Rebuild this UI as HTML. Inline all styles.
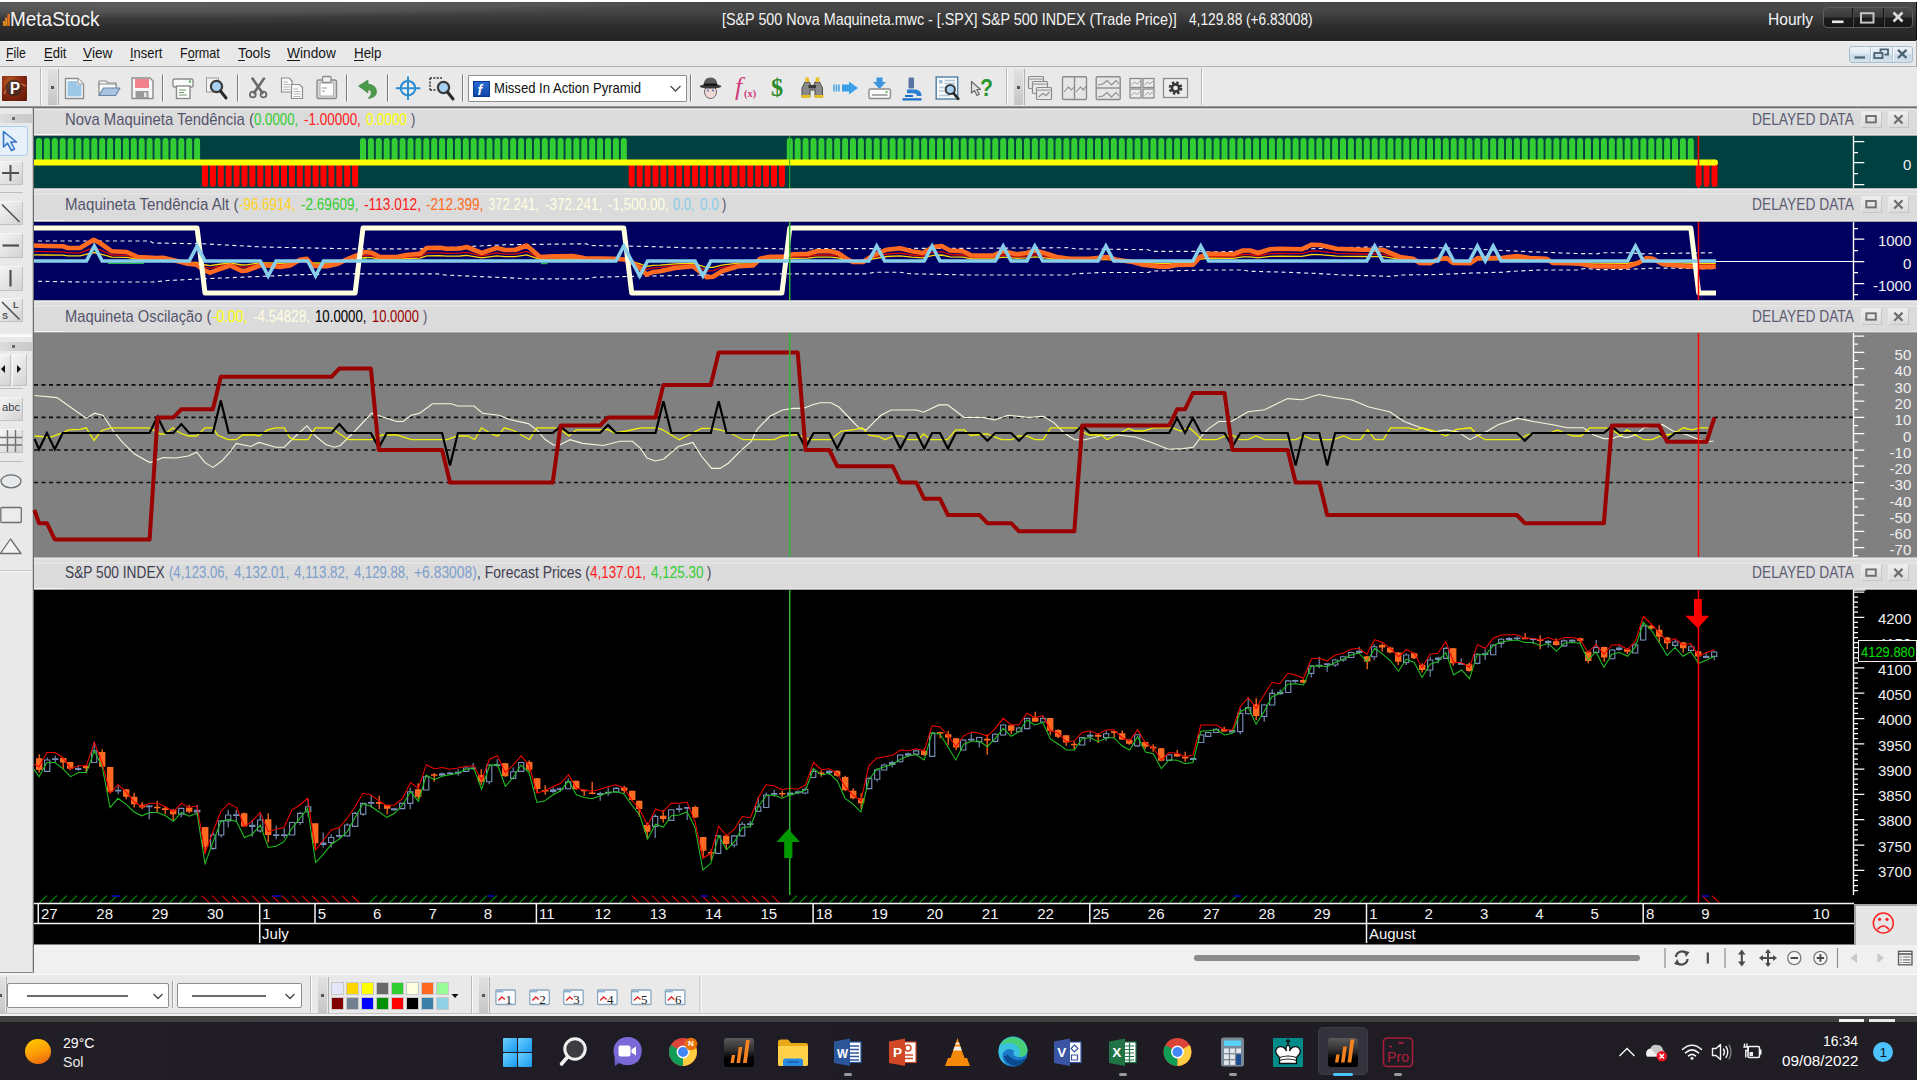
<!DOCTYPE html>
<html><head><meta charset="utf-8"><title>MetaStock</title><style>
html,body{margin:0;padding:0}
body{width:1920px;height:1080px;overflow:hidden;position:relative;background:#e9e9e9;font-family:"Liberation Sans",sans-serif}
.t{position:absolute;white-space:pre;line-height:1;transform-origin:0 0}
div{box-sizing:border-box}
svg{position:absolute;left:0;top:0}
</style></head><body>
<div style="position:absolute;left:1917px;top:0px;width:3px;height:1080px;background:#fff"></div>
<div style="position:absolute;left:0px;top:0px;width:1917px;height:2px;background:#ffffff"></div>
<div style="position:absolute;left:0px;top:2px;width:1917px;height:39px;background:linear-gradient(180deg,#3c3c3c 0%,#4a4a4a 3%,#464646 22%,#383838 45%,#2c2c2c 65%,#262626 92%,#222 100%)"></div>
<div style="position:absolute;left:1916px;top:2px;width:1px;height:39px;background:#0c0c0c"></div>
<div style="position:absolute;left:0;top:2px;width:1917px;height:38px;overflow:hidden"><div style="position:absolute;left:-500px;top:-40px;width:1300px;height:56px;border-radius:50%;background:radial-gradient(ellipse at 50% 40%,rgba(255,255,255,.17),rgba(255,255,255,.07) 60%,rgba(255,255,255,0) 72%)"></div></div>
<div style="position:absolute;left:1823px;top:7px;width:90px;height:21px;border:1px solid #5c5c5c;border-radius:4px;background:linear-gradient(180deg,#4a4a4a 0%,#3a3a3a 45%,#1c1c1c 55%,#161616 100%)"></div>
<div style="position:absolute;left:1852px;top:8px;width:1px;height:19px;background:#111;box-shadow:1px 0 0 #4a4a4a"></div>
<div style="position:absolute;left:1883px;top:8px;width:1px;height:19px;background:#111;box-shadow:1px 0 0 #4a4a4a"></div>
<div style="position:absolute;left:0px;top:41px;width:1917px;height:26px;background:#e9e9e9;border-top:1px solid #f4f4f4;border-bottom:1px solid #b2b2b2"></div>
<div style="position:absolute;left:1916px;top:40px;width:1px;height:974px;background:#a8a8a8"></div>
<div style="position:absolute;left:1849px;top:46px;width:64px;height:17px;border:1px solid #a9bfce;border-radius:3px;background:linear-gradient(180deg,#eef3f7 0%,#dfe9f0 45%,#c9dae6 55%,#d3e2ec 100%)"></div>
<div style="position:absolute;left:1870px;top:47px;width:1px;height:15px;background:#b4c8d6;box-shadow:1px 0 0 #f4f8fa"></div>
<div style="position:absolute;left:1892px;top:47px;width:1px;height:15px;background:#b4c8d6;box-shadow:1px 0 0 #f4f8fa"></div>
<div style="position:absolute;left:0px;top:67px;width:1917px;height:39px;background:#e9e9e9"></div>
<div style="position:absolute;left:0px;top:106px;width:1917px;height:1px;background:#9a9a9a"></div>
<div style="position:absolute;left:0px;top:107px;width:1917px;height:1px;background:#6c6c6c"></div>
<div style="position:absolute;left:0px;top:108px;width:33px;height:866px;background:#e9e9e9"></div>
<div style="position:absolute;left:33px;top:108px;width:1px;height:865px;background:#6e6e6e"></div>
<div style="position:absolute;left:0px;top:972px;width:34px;height:1px;background:#8c8c8c"></div>
<div style="position:absolute;left:32px;top:108px;width:1px;height:866px;background:#c8c8c8"></div>
<div style="position:absolute;left:0px;top:114px;width:32px;height:9px;background:linear-gradient(90deg,#dedede,#d0d0d0 50%,#cacaca)"></div>
<div style="position:absolute;left:12px;top:117px;width:3px;height:3px;background:#6a6a6a"></div>
<div style="position:absolute;left:0px;top:334px;width:32px;height:3px;background:#fafafa"></div>
<div style="position:absolute;left:0px;top:342px;width:32px;height:9px;background:linear-gradient(90deg,#dedede,#d0d0d0 50%,#cacaca)"></div>
<div style="position:absolute;left:12px;top:345px;width:3px;height:3px;background:#6a6a6a"></div>
<div style="position:absolute;left:-2px;top:126px;width:30px;height:30px;border:1px solid #a6d2f5;border-radius:3px;background:#e7f0f8"></div>
<div style="position:absolute;left:-1px;top:161px;width:24px;height:24px;border:1px solid #d4d4d4;border-top-color:#f6f6f6;border-left-color:#f6f6f6;border-bottom-color:#c2c2c2;border-right-color:#c2c2c2;background:linear-gradient(135deg,#f4f4f4 0%,#e4e4e4 50%,#d2d2d2 100%)"></div>
<div style="position:absolute;left:0px;top:192px;width:23px;height:1px;background:#bdbdbd"></div>
<div style="position:absolute;left:-1px;top:201px;width:24px;height:24px;border:1px solid #d4d4d4;border-top-color:#f6f6f6;border-left-color:#f6f6f6;border-bottom-color:#c2c2c2;border-right-color:#c2c2c2;background:linear-gradient(135deg,#f4f4f4 0%,#e4e4e4 50%,#d2d2d2 100%)"></div>
<div style="position:absolute;left:-1px;top:233px;width:24px;height:25px;border:1px solid #d4d4d4;border-top-color:#f6f6f6;border-left-color:#f6f6f6;border-bottom-color:#c2c2c2;border-right-color:#c2c2c2;background:linear-gradient(135deg,#f4f4f4 0%,#e4e4e4 50%,#d2d2d2 100%)"></div>
<div style="position:absolute;left:-1px;top:266px;width:24px;height:25px;border:1px solid #d4d4d4;border-top-color:#f6f6f6;border-left-color:#f6f6f6;border-bottom-color:#c2c2c2;border-right-color:#c2c2c2;background:linear-gradient(135deg,#f4f4f4 0%,#e4e4e4 50%,#d2d2d2 100%)"></div>
<div style="position:absolute;left:-1px;top:298px;width:24px;height:24px;border:1px solid #d4d4d4;border-top-color:#f6f6f6;border-left-color:#f6f6f6;border-bottom-color:#c2c2c2;border-right-color:#c2c2c2;background:linear-gradient(135deg,#f4f4f4 0%,#e4e4e4 50%,#d2d2d2 100%)"></div>
<div style="position:absolute;left:-1px;top:354px;width:12px;height:32px;border:1px solid #d4d4d4;border-top-color:#f6f6f6;border-left-color:#f6f6f6;border-bottom-color:#c2c2c2;border-right-color:#c2c2c2;background:linear-gradient(135deg,#f4f4f4 0%,#e4e4e4 50%,#d2d2d2 100%)"></div>
<div style="position:absolute;left:12px;top:354px;width:15px;height:32px;border:1px solid #d4d4d4;border-top-color:#f6f6f6;border-left-color:#f6f6f6;border-bottom-color:#c2c2c2;border-right-color:#c2c2c2;background:linear-gradient(135deg,#f4f4f4 0%,#e4e4e4 50%,#d2d2d2 100%)"></div>
<div style="position:absolute;left:0px;top:388px;width:23px;height:1px;background:#bdbdbd"></div>
<div style="position:absolute;left:-1px;top:397px;width:24px;height:24px;border:1px solid #d4d4d4;border-top-color:#f6f6f6;border-left-color:#f6f6f6;border-bottom-color:#c2c2c2;border-right-color:#c2c2c2;background:linear-gradient(135deg,#f4f4f4 0%,#e4e4e4 50%,#d2d2d2 100%)"></div>
<div style="position:absolute;left:-1px;top:429px;width:24px;height:24px;border:1px solid #d4d4d4;border-top-color:#f6f6f6;border-left-color:#f6f6f6;border-bottom-color:#c2c2c2;border-right-color:#c2c2c2;background:linear-gradient(135deg,#f4f4f4 0%,#e4e4e4 50%,#d2d2d2 100%)"></div>
<div style="position:absolute;left:0px;top:461px;width:23px;height:1px;background:#bdbdbd"></div>
<div style="position:absolute;left:0px;top:571px;width:32px;height:1px;background:#f8f8f8"></div>
<div style="position:absolute;left:0px;top:570px;width:32px;height:1px;background:#c4c4c4"></div>
<div style="position:absolute;left:34px;top:108px;width:1883px;height:1px;background:#c6c6c6"></div>
<div style="position:absolute;left:34px;top:109px;width:1883px;height:27px;background:#dbdbdb"></div>
<div style="position:absolute;left:34px;top:109px;width:1883px;height:3px;background:linear-gradient(180deg,#e8e8e8,#dadada)"></div>
<div style="position:absolute;left:34px;top:188px;width:1883px;height:1px;background:#b4bcbc"></div>
<div style="position:absolute;left:34px;top:189px;width:1883px;height:4px;background:linear-gradient(180deg,#e9e9e9,#d8d8d8)"></div>
<div style="position:absolute;left:34px;top:193px;width:1883px;height:29px;background:#dbdbdb"></div>
<div style="position:absolute;left:34px;top:193px;width:1883px;height:3px;background:linear-gradient(180deg,#e8e8e8,#dadada)"></div>
<div style="position:absolute;left:34px;top:300px;width:1883px;height:1px;background:#b4bcbc"></div>
<div style="position:absolute;left:34px;top:301px;width:1883px;height:4px;background:linear-gradient(180deg,#e9e9e9,#d8d8d8)"></div>
<div style="position:absolute;left:34px;top:305px;width:1883px;height:28px;background:#dbdbdb"></div>
<div style="position:absolute;left:34px;top:305px;width:1883px;height:3px;background:linear-gradient(180deg,#e8e8e8,#dadada)"></div>
<div style="position:absolute;left:34px;top:557px;width:1883px;height:1px;background:#b4bcbc"></div>
<div style="position:absolute;left:34px;top:558px;width:1883px;height:4px;background:linear-gradient(180deg,#e9e9e9,#d8d8d8)"></div>
<div style="position:absolute;left:34px;top:562px;width:1883px;height:28px;background:#dbdbdb"></div>
<div style="position:absolute;left:34px;top:562px;width:1883px;height:3px;background:linear-gradient(180deg,#e8e8e8,#dadada)"></div>
<div style="position:absolute;left:34px;top:134px;width:1883px;height:1px;background:#e6e6e6"></div>
<div style="position:absolute;left:34px;top:135px;width:1883px;height:1px;background:#a4a4a4"></div>
<div style="position:absolute;left:35px;top:134px;width:28px;height:1px;background:#f6f6f6"></div>
<div style="position:absolute;left:34px;top:220px;width:1883px;height:1px;background:#e6e6e6"></div>
<div style="position:absolute;left:34px;top:221px;width:1883px;height:1px;background:#a4a4a4"></div>
<div style="position:absolute;left:35px;top:220px;width:28px;height:1px;background:#f6f6f6"></div>
<div style="position:absolute;left:34px;top:331px;width:1883px;height:1px;background:#e6e6e6"></div>
<div style="position:absolute;left:34px;top:332px;width:1883px;height:1px;background:#a4a4a4"></div>
<div style="position:absolute;left:35px;top:331px;width:28px;height:1px;background:#f6f6f6"></div>
<div style="position:absolute;left:34px;top:588px;width:1883px;height:1px;background:#e6e6e6"></div>
<div style="position:absolute;left:34px;top:589px;width:1883px;height:1px;background:#a4a4a4"></div>
<div style="position:absolute;left:35px;top:588px;width:28px;height:1px;background:#f6f6f6"></div>
<div style="position:absolute;left:34px;top:136px;width:1883px;height:52px;background:#004040"></div>
<div style="position:absolute;left:34px;top:222px;width:1883px;height:78px;background:#000060"></div>
<div style="position:absolute;left:34px;top:333px;width:1883px;height:224px;background:#808080"></div>
<div style="position:absolute;left:34px;top:590px;width:1883px;height:314px;background:#000000"></div>
<div style="position:absolute;left:34px;top:904px;width:1820px;height:41px;background:#000;border-bottom:1px solid #7c7c7c"></div>
<div style="position:absolute;left:1854px;top:904px;width:63px;height:41px;background:#e6e6e6;border-top:2px solid #a4a4a4;border-left:2px solid #a4a4a4"></div>
<div style="position:absolute;left:34px;top:945px;width:1883px;height:29px;background:#f0f0f0"></div>
<div style="position:absolute;left:0px;top:974px;width:1917px;height:1px;background:#fbfbfb"></div>
<div style="position:absolute;left:1194px;top:955px;width:446px;height:6px;background:#8a8a8a;border-radius:3px"></div>
<div style="position:absolute;left:1860.6px;top:111.0px;width:21px;height:17px;border:1px solid #e8e8e8;border-bottom-color:#c6c6c6;border-right-color:#c6c6c6;background:linear-gradient(180deg,#efefef,#dadada)"></div>
<div style="position:absolute;left:1888px;top:111.0px;width:21px;height:17px;border:1px solid #e8e8e8;border-bottom-color:#c6c6c6;border-right-color:#c6c6c6;background:linear-gradient(180deg,#efefef,#dadada)"></div>
<div style="position:absolute;left:1860.6px;top:196.0px;width:21px;height:17px;border:1px solid #e8e8e8;border-bottom-color:#c6c6c6;border-right-color:#c6c6c6;background:linear-gradient(180deg,#efefef,#dadada)"></div>
<div style="position:absolute;left:1888px;top:196.0px;width:21px;height:17px;border:1px solid #e8e8e8;border-bottom-color:#c6c6c6;border-right-color:#c6c6c6;background:linear-gradient(180deg,#efefef,#dadada)"></div>
<div style="position:absolute;left:1860.6px;top:308.3px;width:21px;height:17px;border:1px solid #e8e8e8;border-bottom-color:#c6c6c6;border-right-color:#c6c6c6;background:linear-gradient(180deg,#efefef,#dadada)"></div>
<div style="position:absolute;left:1888px;top:308.3px;width:21px;height:17px;border:1px solid #e8e8e8;border-bottom-color:#c6c6c6;border-right-color:#c6c6c6;background:linear-gradient(180deg,#efefef,#dadada)"></div>
<div style="position:absolute;left:1860.6px;top:564.4px;width:21px;height:17px;border:1px solid #e8e8e8;border-bottom-color:#c6c6c6;border-right-color:#c6c6c6;background:linear-gradient(180deg,#efefef,#dadada)"></div>
<div style="position:absolute;left:1888px;top:564.4px;width:21px;height:17px;border:1px solid #e8e8e8;border-bottom-color:#c6c6c6;border-right-color:#c6c6c6;background:linear-gradient(180deg,#efefef,#dadada)"></div>
<div style="position:absolute;left:2px;top:76px;width:25px;height:25px;background:radial-gradient(circle at 35% 30%,#c8682a 0%,#8a2a10 45%,#5a1608 100%);border-radius:1px"></div>
<div style="position:absolute;left:48px;top:69px;width:9px;height:36px;background:linear-gradient(180deg,#e2e2e2,#c6c6c6)"></div>
<div style="position:absolute;left:51px;top:85.5px;width:3px;height:3px;background:#555"></div>
<div style="position:absolute;left:57.5px;top:69px;width:1px;height:36px;background:#b0b0b0"></div>
<div style="position:absolute;left:467.5px;top:75px;width:219px;height:27px;background:#fff;border:1px solid #8e8e8e;border-radius:1px"></div>
<div style="position:absolute;left:473px;top:81px;width:16.5px;height:16px;background:linear-gradient(180deg,#2a6ad0,#1048a8);border:1px solid #0a3a90"></div>
<div style="position:absolute;left:1014px;top:69px;width:9px;height:36px;background:linear-gradient(180deg,#e2e2e2,#c6c6c6)"></div>
<div style="position:absolute;left:1017px;top:85.5px;width:3px;height:3px;background:#555"></div>
<div style="position:absolute;left:1023.5px;top:69px;width:1px;height:36px;background:#b0b0b0"></div>
<div style="position:absolute;left:0px;top:975px;width:1917px;height:39px;background:#e9e9e9"></div>
<div style="position:absolute;left:0px;top:1013px;width:1917px;height:1px;background:#c4c4c4"></div>
<div style="position:absolute;left:0px;top:1014px;width:1917px;height:2px;background:#f0f0f0"></div>
<div style="position:absolute;left:7px;top:983px;width:162px;height:25px;background:#fff;border:1px solid #8e8e8e;border-radius:2px"></div>
<div style="position:absolute;left:177px;top:983px;width:124.5px;height:25px;background:#fff;border:1px solid #8e8e8e;border-radius:2px"></div>
<div style="position:absolute;left:318px;top:977px;width:9px;height:36px;background:linear-gradient(180deg,#e2e2e2,#c6c6c6)"></div>
<div style="position:absolute;left:321px;top:994px;width:3px;height:3px;background:#555"></div>
<div style="position:absolute;left:327.5px;top:977px;width:1px;height:36px;background:#b0b0b0"></div>
<div style="position:absolute;left:-4px;top:977px;width:9px;height:36px;background:linear-gradient(180deg,#e2e2e2,#c6c6c6)"></div>
<div style="position:absolute;left:-1px;top:994px;width:3px;height:3px;background:#555"></div>
<div style="position:absolute;left:5.5px;top:977px;width:1px;height:36px;background:#b0b0b0"></div>
<div style="position:absolute;left:331.0px;top:982px;width:13px;height:13px;background:#e6e6fa;border:1px solid #c8c8c8"></div>
<div style="position:absolute;left:331.0px;top:997.3px;width:13px;height:13px;background:#800000;border:1px solid #c8c8c8"></div>
<div style="position:absolute;left:346.05px;top:982px;width:13px;height:13px;background:#ffd700;border:1px solid #c8c8c8"></div>
<div style="position:absolute;left:346.05px;top:997.3px;width:13px;height:13px;background:#708090;border:1px solid #c8c8c8"></div>
<div style="position:absolute;left:361.1px;top:982px;width:13px;height:13px;background:#ffff00;border:1px solid #c8c8c8"></div>
<div style="position:absolute;left:361.1px;top:997.3px;width:13px;height:13px;background:#0000ff;border:1px solid #c8c8c8"></div>
<div style="position:absolute;left:376.15px;top:982px;width:13px;height:13px;background:#696969;border:1px solid #c8c8c8"></div>
<div style="position:absolute;left:376.15px;top:997.3px;width:13px;height:13px;background:#009000;border:1px solid #c8c8c8"></div>
<div style="position:absolute;left:391.2px;top:982px;width:13px;height:13px;background:#32cd32;border:1px solid #c8c8c8"></div>
<div style="position:absolute;left:391.2px;top:997.3px;width:13px;height:13px;background:#ff0000;border:1px solid #c8c8c8"></div>
<div style="position:absolute;left:406.25px;top:982px;width:13px;height:13px;background:#ffffe0;border:1px solid #c8c8c8"></div>
<div style="position:absolute;left:406.25px;top:997.3px;width:13px;height:13px;background:#000000;border:1px solid #c8c8c8"></div>
<div style="position:absolute;left:421.3px;top:982px;width:13px;height:13px;background:#ff6a20;border:1px solid #c8c8c8"></div>
<div style="position:absolute;left:421.3px;top:997.3px;width:13px;height:13px;background:#3a80a8;border:1px solid #c8c8c8"></div>
<div style="position:absolute;left:436.35px;top:982px;width:13px;height:13px;background:#98fb98;border:1px solid #c8c8c8"></div>
<div style="position:absolute;left:436.35px;top:997.3px;width:13px;height:13px;background:#90d0e4;border:1px solid #c8c8c8"></div>
<div style="position:absolute;left:479px;top:977px;width:9px;height:36px;background:linear-gradient(180deg,#e2e2e2,#c6c6c6)"></div>
<div style="position:absolute;left:482px;top:994px;width:3px;height:3px;background:#555"></div>
<div style="position:absolute;left:488.5px;top:977px;width:1px;height:36px;background:#b0b0b0"></div>
<div style="position:absolute;left:0px;top:1016px;width:1917px;height:6px;background:#404040"></div>
<div style="position:absolute;left:0px;top:1022px;width:1917px;height:58px;background:linear-gradient(90deg,#221e26 0%,#201c26 30%,#1f1b23 60%,#201d24 100%)"></div>
<div style="position:absolute;left:1839px;top:1019px;width:25px;height:3px;background:#f4f4f4"></div>
<div style="position:absolute;left:1868.5px;top:1019px;width:26.5px;height:3px;background:#e8e8e8"></div>
<div style="position:absolute;left:25.3px;top:1039px;width:25.4px;height:25.4px;border-radius:50%;background:linear-gradient(160deg,#ffc400 10%,#fb9a08 55%,#e85a0c 100%)"></div>
<div style="position:absolute;left:503px;top:1038px;width:14px;height:14px;background:linear-gradient(135deg,#6ad0ff,#1a98f0);border-radius:1px"></div>
<div style="position:absolute;left:518px;top:1038px;width:14px;height:14px;background:linear-gradient(135deg,#6ad0ff,#1a98f0);border-radius:1px"></div>
<div style="position:absolute;left:503px;top:1053px;width:14px;height:14px;background:linear-gradient(135deg,#6ad0ff,#1a98f0);border-radius:1px"></div>
<div style="position:absolute;left:518px;top:1053px;width:14px;height:14px;background:linear-gradient(135deg,#6ad0ff,#1a98f0);border-radius:1px"></div>
<div style="position:absolute;left:723.5px;top:1038px;width:30px;height:29px;background:linear-gradient(180deg,#5a5a5a 0%,#2c2c2c 45%,#000 70%);border-radius:3px"></div>
<div style="position:absolute;left:1273px;top:1037.5px;width:30px;height:29px;background:#008b8b"></div>
<div style="position:absolute;left:1318px;top:1027px;width:49.5px;height:48px;background:#34323c;border-radius:5px;border:1px solid #3e3c46"></div>
<div style="position:absolute;left:1328px;top:1037.5px;width:30px;height:29px;background:linear-gradient(180deg,#5a5a5a 0%,#2c2c2c 45%,#000 70%);border-radius:3px"></div>
<div style="position:absolute;left:844.0px;top:1073px;width:8px;height:3px;background:#9a9a9a;border-radius:1.5px"></div>
<div style="position:absolute;left:1119.0px;top:1073px;width:8px;height:3px;background:#9a9a9a;border-radius:1.5px"></div>
<div style="position:absolute;left:1229.0px;top:1073px;width:8px;height:3px;background:#9a9a9a;border-radius:1.5px"></div>
<div style="position:absolute;left:1333.0px;top:1073px;width:20px;height:3px;background:#4cc2ff;border-radius:1.5px"></div>
<div style="position:absolute;left:1394.0px;top:1073px;width:8px;height:3px;background:#9a9a9a;border-radius:1.5px"></div>
<div style="position:absolute;left:1873px;top:1042px;width:20px;height:20px;border-radius:50%;background:#4cc2ff"></div>
<svg width="1920" height="1080" viewBox="0 0 1920 1080">
<g><rect x="2.9" y="21" width="2.1" height="4.9" fill="#d98a22"/><rect x="5.2" y="17.6" width="2.1" height="8.3" fill="#ec8a1e"/><rect x="7.5" y="14.1" width="2.3" height="11.8" fill="#e87422"/></g>
<rect x="1832" y="20.5" width="11.5" height="2.6" fill="#e8e8e8"/>
<rect x="1861" y="13.2" width="12.5" height="9.4" fill="none" stroke="#c4c4c4" stroke-width="2"/>
<path d="M1893.5 12.5 L1902.5 21.5 M1902.5 12.5 L1893.5 21.5" stroke="#dcdcdc" stroke-width="2.6" fill="none"/>
<rect x="1854.5" y="56.4" width="10.5" height="2.2" fill="#4a6272"/>
<g fill="none" stroke="#4a6272" stroke-width="1.8"><path d="M1880.5 52.5 V49.3 H1888 V54.5 H1884.5"/><rect x="1874.3" y="53" width="8.2" height="5"/></g>
<path d="M1898 49.8 L1906.5 58 M1906.5 49.8 L1898 58" stroke="#4a6272" stroke-width="2.3" fill="none"/>
<path d="M3.5 131.5 L3.5 147 L7.5 143.2 L11.5 150.5 L14.5 149 L10.8 142 L16.5 142 Z" fill="#dfeefc" stroke="#3a78c8" stroke-width="1.6" stroke-linejoin="round"/>
<path d="M10.5 165 V181 M2 173 H19" stroke="#505050" stroke-width="2" fill="none"/>
<path d="M2 204.5 L19.5 222" stroke="#505050" stroke-width="1.6"/>
<path d="M2.5 245.5 H19" stroke="#505050" stroke-width="2.2"/>
<path d="M10.5 270 V286.5" stroke="#505050" stroke-width="2.2"/>
<path d="M2 302 L19.5 319.5" stroke="#505050" stroke-width="1.6"/>
<path d="M1 369 L5 365 V373 Z M21 369 L17 365 V373 Z" fill="#111"/>
<path d="M7.5 430 V452 M15.5 430 V452 M0 437.5 H22 M0 445 H22" stroke="#707070" stroke-width="1.4"/>
<ellipse cx="11" cy="481.3" rx="10" ry="6.5" fill="#e6eaec" stroke="#6e6e6e" stroke-width="1.3"/>
<rect x="0.8" y="507.5" width="20.5" height="15" rx="1" fill="#ececec" stroke="#6e6e6e" stroke-width="1.3"/>
<path d="M10.5 539 L21 553.5 H0.5 Z" fill="#f2f4f4" stroke="#6e6e6e" stroke-width="1.3" stroke-linejoin="round"/>
<rect x="1866.3" y="116.0" width="9.5" height="6.4" fill="none" stroke="#6e6e6e" stroke-width="1.9"/>
<path d="M1894.3 115.3 L1902.5 123.5 M1902.5 115.3 L1894.3 123.5" stroke="#6e6e6e" stroke-width="2.2" fill="none"/>
<rect x="1866.3" y="201.0" width="9.5" height="6.4" fill="none" stroke="#6e6e6e" stroke-width="1.9"/>
<path d="M1894.3 200.3 L1902.5 208.5 M1902.5 200.3 L1894.3 208.5" stroke="#6e6e6e" stroke-width="2.2" fill="none"/>
<rect x="1866.3" y="313.3" width="9.5" height="6.4" fill="none" stroke="#6e6e6e" stroke-width="1.9"/>
<path d="M1894.3 312.6 L1902.5 320.8 M1902.5 312.6 L1894.3 320.8" stroke="#6e6e6e" stroke-width="2.2" fill="none"/>
<rect x="1866.3" y="569.4" width="9.5" height="6.4" fill="none" stroke="#6e6e6e" stroke-width="1.9"/>
<path d="M1894.3 568.6999999999999 L1902.5 576.9 M1902.5 568.6999999999999 L1894.3 576.9" stroke="#6e6e6e" stroke-width="2.2" fill="none"/>
<path d="M39.0 141 V160 M46.9 141 V160 M54.8 141 V160 M62.7 141 V160 M70.6 141 V160 M78.5 141 V160 M86.4 141 V160 M94.3 141 V160 M102.2 141 V160 M110.1 141 V160 M118.0 141 V160 M125.9 141 V160 M133.8 141 V160 M141.7 141 V160 M149.6 141 V160 M157.5 141 V160 M165.5 141 V160 M173.4 141 V160 M181.3 141 V160 M189.2 141 V160 M197.1 141 V160 M363.0 141 V160 M370.9 141 V160 M378.8 141 V160 M386.7 141 V160 M394.6 141 V160 M402.6 141 V160 M410.5 141 V160 M418.4 141 V160 M426.3 141 V160 M434.2 141 V160 M442.1 141 V160 M450.0 141 V160 M457.9 141 V160 M465.8 141 V160 M473.7 141 V160 M481.6 141 V160 M489.5 141 V160 M497.4 141 V160 M505.3 141 V160 M513.2 141 V160 M521.1 141 V160 M529.0 141 V160 M536.9 141 V160 M544.8 141 V160 M552.7 141 V160 M560.6 141 V160 M568.5 141 V160 M576.4 141 V160 M584.3 141 V160 M592.2 141 V160 M600.1 141 V160 M608.0 141 V160 M615.9 141 V160 M623.8 141 V160 M789.8 141 V160 M797.7 141 V160 M805.6 141 V160 M813.5 141 V160 M821.4 141 V160 M829.3 141 V160 M837.2 141 V160 M845.1 141 V160 M853.0 141 V160 M860.9 141 V160 M868.8 141 V160 M876.7 141 V160 M884.7 141 V160 M892.6 141 V160 M900.5 141 V160 M908.4 141 V160 M916.3 141 V160 M924.2 141 V160 M932.1 141 V160 M940.0 141 V160 M947.9 141 V160 M955.8 141 V160 M963.7 141 V160 M971.6 141 V160 M979.5 141 V160 M987.4 141 V160 M995.3 141 V160 M1003.2 141 V160 M1011.1 141 V160 M1019.0 141 V160 M1026.9 141 V160 M1034.8 141 V160 M1042.7 141 V160 M1050.6 141 V160 M1058.5 141 V160 M1066.4 141 V160 M1074.3 141 V160 M1082.2 141 V160 M1090.1 141 V160 M1098.0 141 V160 M1105.9 141 V160 M1113.8 141 V160 M1121.8 141 V160 M1129.7 141 V160 M1137.6 141 V160 M1145.5 141 V160 M1153.4 141 V160 M1161.3 141 V160 M1169.2 141 V160 M1177.1 141 V160 M1185.0 141 V160 M1192.9 141 V160 M1200.8 141 V160 M1208.7 141 V160 M1216.6 141 V160 M1224.5 141 V160 M1232.4 141 V160 M1240.3 141 V160 M1248.2 141 V160 M1256.1 141 V160 M1264.0 141 V160 M1271.9 141 V160 M1279.8 141 V160 M1287.7 141 V160 M1295.6 141 V160 M1303.5 141 V160 M1311.4 141 V160 M1319.3 141 V160 M1327.2 141 V160 M1335.1 141 V160 M1343.0 141 V160 M1350.9 141 V160 M1358.9 141 V160 M1366.8 141 V160 M1374.7 141 V160 M1382.6 141 V160 M1390.5 141 V160 M1398.4 141 V160 M1406.3 141 V160 M1414.2 141 V160 M1422.1 141 V160 M1430.0 141 V160 M1437.9 141 V160 M1445.8 141 V160 M1453.7 141 V160 M1461.6 141 V160 M1469.5 141 V160 M1477.4 141 V160 M1485.3 141 V160 M1493.2 141 V160 M1501.1 141 V160 M1509.0 141 V160 M1516.9 141 V160 M1524.8 141 V160 M1532.7 141 V160 M1540.6 141 V160 M1548.5 141 V160 M1556.4 141 V160 M1564.3 141 V160 M1572.2 141 V160 M1580.1 141 V160 M1588.0 141 V160 M1596.0 141 V160 M1603.9 141 V160 M1611.8 141 V160 M1619.7 141 V160 M1627.6 141 V160 M1635.5 141 V160 M1643.4 141 V160 M1651.3 141 V160 M1659.2 141 V160 M1667.1 141 V160 M1675.0 141 V160 M1682.9 141 V160 M1690.8 141 V160 " stroke="#32cd32" stroke-width="6" stroke-linecap="round" fill="none"/>
<path d="M205.0 165 V184 M212.9 165 V184 M220.8 165 V184 M228.7 165 V184 M236.6 165 V184 M244.5 165 V184 M252.4 165 V184 M260.3 165 V184 M268.2 165 V184 M276.1 165 V184 M284.0 165 V184 M291.9 165 V184 M299.8 165 V184 M307.7 165 V184 M315.6 165 V184 M323.5 165 V184 M331.4 165 V184 M339.3 165 V184 M347.2 165 V184 M355.1 165 V184 M631.7 165 V184 M639.7 165 V184 M647.6 165 V184 M655.5 165 V184 M663.4 165 V184 M671.3 165 V184 M679.2 165 V184 M687.1 165 V184 M695.0 165 V184 M702.9 165 V184 M710.8 165 V184 M718.7 165 V184 M726.6 165 V184 M734.5 165 V184 M742.4 165 V184 M750.3 165 V184 M758.2 165 V184 M766.1 165 V184 M774.0 165 V184 M781.9 165 V184 M1698.7 165 V184 M1706.6 165 V184 M1714.5 165 V184 " stroke="#ff0000" stroke-width="6" stroke-linecap="round" fill="none"/>
<rect x="34" y="159.5" width="1681" height="6" fill="#ffff00"/><circle cx="1715" cy="162.5" r="3" fill="#ffff00"/>
<path d="M1853.5 136 V188" stroke="#fff" stroke-width="1.4"/>
<path d="M1853.5 141.5 h10.8 M1853.5 162.5 h10.8 M1853.5 184.5 h10.8 M1853.5 152.5 h4.5 M1853.5 173.5 h4.5 " stroke="#fff" stroke-width="1.25"/>
<polyline points="38.0,241.0 150.0,241.0 153.0,243.0 203.0,243.8 263.0,247.0 350.0,248.8 420.0,248.8 440.0,248.0 473.0,246.3 506.7,244.7 586.7,243.8 590.0,245.5 650.0,246.5 691.7,248.0 716.7,247.7 750.0,248.0 783.0,248.8 970.0,248.3 1068.0,247.7 1075.0,248.8 1148.0,249.7 1152.0,251.3 1193.0,251.3 1210.0,252.0 1280.0,250.3 1311.7,248.8 1336.7,247.7 1386.7,246.7 1436.7,247.7 1470.0,248.8 1503.0,250.5 1536.7,252.0 1576.7,253.5 1598.0,253.8 1601.0,252.7 1626.7,252.7 1643.0,253.8 1715.0,252.7" fill="none" stroke="#f0f0f0" stroke-width="1.15" stroke-dasharray="4 3.5"/>
<polyline points="38.0,281.3 80.0,282.0 153.0,282.0 168.0,280.5 203.0,278.8 263.0,276.3 300.0,274.7 350.0,273.8 436.7,273.8 445.0,275.0 473.0,276.3 506.7,277.7 526.7,278.8 586.7,278.8 595.0,277.2 650.0,276.0 733.0,274.7 783.0,273.8 866.7,273.8 875.0,272.2 900.0,272.2 910.0,273.8 970.0,275.0 1068.0,275.0 1075.0,273.8 1101.7,272.5 1148.0,272.5 1153.0,271.0 1210.0,270.0 1243.0,270.0 1250.0,271.3 1285.0,272.2 1315.0,273.4 1343.0,275.0 1390.0,276.3 1403.0,275.0 1441.7,274.4 1473.0,273.0 1503.0,272.2 1511.7,271.3 1540.0,270.0 1576.7,270.0 1585.0,268.5 1601.7,269.7 1626.7,269.3 1660.0,268.0 1715.0,268.8" fill="none" stroke="#f0f0f0" stroke-width="1.15" stroke-dasharray="4 3.5"/>
<path d="M108 263.3 H144 M541 263.5 H547.5 M362.5 258.8 H366.7" stroke="#22b14c" stroke-width="1.5"/>
<polyline points="34.0,251.4 46.7,251.7 63.0,251.9 68.0,252.9 80.0,252.9 93.8,247.8 100.0,249.8 111.7,255.0 126.7,255.4 138.0,258.5 156.7,259.1 163.0,259.0 171.7,260.2 180.0,261.4 188.0,262.7 196.7,263.3 203.0,266.4 210.0,268.3 218.0,266.4 230.0,263.8 241.7,267.2 246.7,266.9 260.0,263.8 268.0,263.8 280.0,264.7 290.0,263.8 300.0,260.2 306.7,259.6 313.0,264.1 326.7,264.3 338.0,262.7 348.0,259.6 356.7,257.6 365.0,255.4 371.7,255.9 380.0,258.5 396.7,258.5 406.7,257.3 420.0,256.5 426.7,252.9 440.0,252.8 446.7,253.4 460.0,253.2 466.7,252.3 481.7,256.0 496.7,252.9 505.0,254.2 515.0,254.2 526.7,251.4 540.0,258.5 553.0,258.1 573.0,257.9 585.0,259.3 615.0,259.6 626.7,260.2 633.0,262.2 640.0,265.3 646.7,269.5 653.0,267.8 660.0,267.4 675.0,265.3 693.0,264.3 706.7,271.0 713.0,270.7 721.7,267.4 738.0,264.3 753.0,263.8 760.0,259.6 770.0,258.3 783.0,258.3 793.0,256.8 808.0,256.5 816.7,255.0 830.0,255.0 838.0,256.0 848.0,260.2 853.0,261.6 863.0,261.6 873.0,257.6 886.7,254.0 900.0,253.1 911.7,255.0 923.0,256.0 933.0,252.3 941.7,251.7 950.0,254.5 963.0,255.0 971.7,257.6 993.0,257.6 1003.0,255.0 1016.7,256.8 1026.7,256.0 1035.0,254.5 1046.7,256.5 1056.7,258.5 1070.0,259.6 1090.0,259.6 1106.7,258.5 1116.7,260.2 1133.0,261.6 1143.0,263.3 1160.0,264.5 1168.0,264.5 1176.7,263.5 1193.0,263.3 1200.0,258.5 1208.0,256.5 1233.0,256.8 1243.0,254.5 1250.0,254.5 1258.0,256.0 1270.0,253.7 1280.0,253.4 1301.7,253.7 1311.7,250.9 1320.0,251.1 1336.7,253.4 1361.7,254.0 1383.0,254.2 1400.0,258.5 1413.0,259.6 1420.0,262.2 1430.0,262.4 1436.7,260.2 1446.7,259.1 1453.0,262.2 1470.0,262.4 1478.0,259.1 1493.0,259.1 1503.0,259.0 1516.7,257.9 1530.0,259.1 1546.7,259.6 1553.0,262.2 1570.0,262.4 1580.0,262.7 1593.0,264.3 1626.7,264.5 1638.0,262.2 1646.7,259.1 1653.0,259.6 1663.0,263.0 1685.0,264.3 1701.7,264.8 1715.8,264.5" fill="none" stroke="#e00000" stroke-width="1.3"/>
<polyline points="34.0,254.8 46.7,255.0 63.0,255.1 68.0,255.8 80.0,255.8 93.8,252.5 100.0,253.8 111.7,257.1 126.7,257.4 138.0,259.4 156.7,259.8 163.0,259.7 171.7,260.5 180.0,261.3 188.0,262.1 196.7,262.5 203.0,264.5 210.0,265.7 218.0,264.5 230.0,262.8 241.7,265.0 246.7,264.8 260.0,262.8 268.0,262.8 280.0,263.4 290.0,262.8 300.0,260.5 306.7,260.1 313.0,263.0 326.7,263.1 338.0,262.1 348.0,260.1 356.7,258.8 365.0,257.4 371.7,257.7 380.0,259.4 396.7,259.4 406.7,258.6 420.0,258.1 426.7,255.8 440.0,255.7 446.7,256.1 460.0,256.0 466.7,255.4 481.7,257.8 496.7,255.8 505.0,256.6 515.0,256.6 526.7,254.8 540.0,259.4 553.0,259.1 573.0,259.0 585.0,259.9 615.0,260.1 626.7,260.5 633.0,261.8 640.0,263.8 646.7,266.5 653.0,265.4 660.0,265.1 675.0,263.8 693.0,263.1 706.7,267.5 713.0,267.3 721.7,265.1 738.0,263.1 753.0,262.8 760.0,260.1 770.0,259.3 783.0,259.3 793.0,258.3 808.0,258.1 816.7,257.1 830.0,257.1 838.0,257.8 848.0,260.5 853.0,261.4 863.0,261.4 873.0,258.8 886.7,256.5 900.0,255.9 911.7,257.1 923.0,257.8 933.0,255.4 941.7,255.0 950.0,256.8 963.0,257.1 971.7,258.8 993.0,258.8 1003.0,257.1 1016.7,258.3 1026.7,257.8 1035.0,256.8 1046.7,258.1 1056.7,259.4 1070.0,260.1 1090.0,260.1 1106.7,259.4 1116.7,260.5 1133.0,261.4 1143.0,262.5 1160.0,263.3 1168.0,263.3 1176.7,262.6 1193.0,262.5 1200.0,259.4 1208.0,258.1 1233.0,258.3 1243.0,256.8 1250.0,256.8 1258.0,257.8 1270.0,256.3 1280.0,256.1 1301.7,256.3 1311.7,254.5 1320.0,254.6 1336.7,256.1 1361.7,256.5 1383.0,256.6 1400.0,259.4 1413.0,260.1 1420.0,261.8 1430.0,261.9 1436.7,260.5 1446.7,259.8 1453.0,261.8 1470.0,261.9 1478.0,259.8 1493.0,259.8 1503.0,259.7 1516.7,259.0 1530.0,259.8 1546.7,260.1 1553.0,261.8 1570.0,261.9 1580.0,262.1 1593.0,263.1 1626.7,263.3 1638.0,261.8 1646.7,259.8 1653.0,260.1 1663.0,262.3 1685.0,263.1 1701.7,263.5 1715.8,263.3" fill="none" stroke="#ffd700" stroke-width="1.3"/>
<polyline points="34.0,245.5 46.7,246.0 63.0,246.3 68.0,248.0 80.0,248.0 93.8,239.7 100.0,243.0 111.7,251.3 126.7,252.0 138.0,257.0 156.7,258.0 163.0,257.7 171.7,259.7 180.0,261.7 188.0,263.8 196.7,264.7 203.0,269.7 210.0,272.7 218.0,269.7 230.0,265.5 241.7,271.0 246.7,270.5 260.0,265.5 268.0,265.5 280.0,267.0 290.0,265.5 300.0,259.7 306.7,258.8 313.0,266.0 326.7,266.3 338.0,263.8 348.0,258.8 356.7,255.5 365.0,252.0 371.7,252.7 380.0,257.0 396.7,257.0 406.7,255.0 420.0,253.8 426.7,248.0 440.0,247.7 446.7,248.8 460.0,248.5 466.7,247.0 481.7,253.0 496.7,248.0 505.0,250.0 515.0,250.0 526.7,245.5 540.0,257.0 553.0,256.3 573.0,256.0 585.0,258.3 615.0,258.8 626.7,259.7 633.0,263.0 640.0,268.0 646.7,274.7 653.0,272.0 660.0,271.3 675.0,268.0 693.0,266.3 706.7,277.2 713.0,276.7 721.7,271.3 738.0,266.3 753.0,265.5 760.0,258.8 770.0,256.7 783.0,256.7 793.0,254.3 808.0,253.8 816.7,251.3 830.0,251.3 838.0,253.0 848.0,259.7 853.0,262.0 863.0,262.0 873.0,255.5 886.7,249.7 900.0,248.3 911.7,251.3 923.0,253.0 933.0,247.0 941.7,246.0 950.0,250.5 963.0,251.3 971.7,255.5 993.0,255.5 1003.0,251.3 1016.7,254.3 1026.7,253.0 1035.0,250.5 1046.7,253.8 1056.7,257.0 1070.0,258.8 1090.0,258.8 1106.7,257.0 1116.7,259.7 1133.0,262.0 1143.0,264.7 1160.0,266.7 1168.0,266.7 1176.7,265.0 1193.0,264.7 1200.0,257.0 1208.0,253.8 1233.0,254.3 1243.0,250.5 1250.0,250.5 1258.0,253.0 1270.0,249.3 1280.0,248.8 1301.7,249.3 1311.7,244.7 1320.0,245.0 1336.7,248.8 1361.7,249.7 1383.0,250.0 1400.0,257.0 1413.0,258.8 1420.0,263.0 1430.0,263.3 1436.7,259.7 1446.7,258.0 1453.0,263.0 1470.0,263.3 1478.0,258.0 1493.0,258.0 1503.0,257.7 1516.7,256.0 1530.0,258.0 1546.7,258.8 1553.0,263.0 1570.0,263.3 1580.0,263.8 1593.0,266.3 1626.7,266.7 1638.0,263.0 1646.7,258.0 1653.0,258.8 1663.0,264.3 1685.0,266.3 1701.7,267.2 1715.8,266.7" fill="none" stroke="#ff6a20" stroke-width="4.6" stroke-linejoin="round"/>
<polyline points="34.0,228.0 39.0,228.0 46.9,228.0 54.8,228.0 62.7,228.0 70.6,228.0 78.5,228.0 86.4,228.0 94.3,228.0 102.2,228.0 110.1,228.0 118.0,228.0 125.9,228.0 133.8,228.0 141.7,228.0 149.6,228.0 157.5,228.0 165.5,228.0 173.4,228.0 181.3,228.0 189.2,228.0 197.1,228.0 205.0,293.0 212.9,293.0 220.8,293.0 228.7,293.0 236.6,293.0 244.5,293.0 252.4,293.0 260.3,293.0 268.2,293.0 276.1,293.0 284.0,293.0 291.9,293.0 299.8,293.0 307.7,293.0 315.6,293.0 323.5,293.0 331.4,293.0 339.3,293.0 347.2,293.0 355.1,293.0 363.0,228.0 370.9,228.0 378.8,228.0 386.7,228.0 394.6,228.0 402.6,228.0 410.5,228.0 418.4,228.0 426.3,228.0 434.2,228.0 442.1,228.0 450.0,228.0 457.9,228.0 465.8,228.0 473.7,228.0 481.6,228.0 489.5,228.0 497.4,228.0 505.3,228.0 513.2,228.0 521.1,228.0 529.0,228.0 536.9,228.0 544.8,228.0 552.7,228.0 560.6,228.0 568.5,228.0 576.4,228.0 584.3,228.0 592.2,228.0 600.1,228.0 608.0,228.0 615.9,228.0 623.8,228.0 631.7,293.0 639.7,293.0 647.6,293.0 655.5,293.0 663.4,293.0 671.3,293.0 679.2,293.0 687.1,293.0 695.0,293.0 702.9,293.0 710.8,293.0 718.7,293.0 726.6,293.0 734.5,293.0 742.4,293.0 750.3,293.0 758.2,293.0 766.1,293.0 774.0,293.0 781.9,293.0 789.8,228.0 797.7,228.0 805.6,228.0 813.5,228.0 821.4,228.0 829.3,228.0 837.2,228.0 845.1,228.0 853.0,228.0 860.9,228.0 868.8,228.0 876.7,228.0 884.7,228.0 892.6,228.0 900.5,228.0 908.4,228.0 916.3,228.0 924.2,228.0 932.1,228.0 940.0,228.0 947.9,228.0 955.8,228.0 963.7,228.0 971.6,228.0 979.5,228.0 987.4,228.0 995.3,228.0 1003.2,228.0 1011.1,228.0 1019.0,228.0 1026.9,228.0 1034.8,228.0 1042.7,228.0 1050.6,228.0 1058.5,228.0 1066.4,228.0 1074.3,228.0 1082.2,228.0 1090.1,228.0 1098.0,228.0 1105.9,228.0 1113.8,228.0 1121.8,228.0 1129.7,228.0 1137.6,228.0 1145.5,228.0 1153.4,228.0 1161.3,228.0 1169.2,228.0 1177.1,228.0 1185.0,228.0 1192.9,228.0 1200.8,228.0 1208.7,228.0 1216.6,228.0 1224.5,228.0 1232.4,228.0 1240.3,228.0 1248.2,228.0 1256.1,228.0 1264.0,228.0 1271.9,228.0 1279.8,228.0 1287.7,228.0 1295.6,228.0 1303.5,228.0 1311.4,228.0 1319.3,228.0 1327.2,228.0 1335.1,228.0 1343.0,228.0 1350.9,228.0 1358.9,228.0 1366.8,228.0 1374.7,228.0 1382.6,228.0 1390.5,228.0 1398.4,228.0 1406.3,228.0 1414.2,228.0 1422.1,228.0 1430.0,228.0 1437.9,228.0 1445.8,228.0 1453.7,228.0 1461.6,228.0 1469.5,228.0 1477.4,228.0 1485.3,228.0 1493.2,228.0 1501.1,228.0 1509.0,228.0 1516.9,228.0 1524.8,228.0 1532.7,228.0 1540.6,228.0 1548.5,228.0 1556.4,228.0 1564.3,228.0 1572.2,228.0 1580.1,228.0 1588.0,228.0 1596.0,228.0 1603.9,228.0 1611.8,228.0 1619.7,228.0 1627.6,228.0 1635.5,228.0 1643.4,228.0 1651.3,228.0 1659.2,228.0 1667.1,228.0 1675.0,228.0 1682.9,228.0 1690.8,228.0 1698.7,293.0 1706.6,293.0 1714.5,293.0 1716.0,293.0" fill="none" stroke="#ffffe0" stroke-width="5" stroke-linejoin="round"/>
<polyline points="34.0,261.0 39.0,261.0 46.9,261.0 54.8,261.0 62.7,261.0 70.6,261.0 78.5,261.0 86.4,261.0 94.3,246.0 102.2,261.0 110.1,261.0 118.0,261.0 125.9,261.0 133.8,261.0 141.7,261.0 149.6,261.0 157.5,261.0 165.5,261.0 173.4,261.0 181.3,261.0 189.2,261.0 197.1,246.0 205.0,261.0 212.9,261.0 220.8,261.0 228.7,261.0 236.6,261.0 244.5,261.0 252.4,261.0 260.3,261.0 268.2,276.0 276.1,261.0 284.0,261.0 291.9,261.0 299.8,261.0 307.7,261.0 315.6,276.0 323.5,261.0 331.4,261.0 339.3,261.0 347.2,261.0 355.1,261.0 363.0,261.0 370.9,261.0 378.8,261.0 386.7,261.0 394.6,261.0 402.6,261.0 410.5,261.0 418.4,261.0 426.3,261.0 434.2,261.0 442.1,261.0 450.0,261.0 457.9,261.0 465.8,261.0 473.7,261.0 481.6,261.0 489.5,261.0 497.4,261.0 505.3,261.0 513.2,261.0 521.1,261.0 529.0,261.0 536.9,261.0 544.8,261.0 552.7,261.0 560.6,261.0 568.5,261.0 576.4,261.0 584.3,261.0 592.2,261.0 600.1,261.0 608.0,261.0 615.9,261.0 623.8,246.0 631.7,261.0 639.7,276.0 647.6,261.0 655.5,261.0 663.4,261.0 671.3,261.0 679.2,261.0 687.1,261.0 695.0,261.0 702.9,276.0 710.8,261.0 718.7,261.0 726.6,261.0 734.5,261.0 742.4,261.0 750.3,261.0 758.2,261.0 766.1,261.0 774.0,261.0 781.9,261.0 789.8,261.0 797.7,261.0 805.6,261.0 813.5,261.0 821.4,261.0 829.3,261.0 837.2,261.0 845.1,261.0 853.0,261.0 860.9,261.0 868.8,261.0 876.7,246.0 884.7,261.0 892.6,261.0 900.5,261.0 908.4,261.0 916.3,261.0 924.2,261.0 932.1,246.0 940.0,261.0 947.9,261.0 955.8,261.0 963.7,261.0 971.6,261.0 979.5,261.0 987.4,261.0 995.3,261.0 1003.2,246.0 1011.1,261.0 1019.0,261.0 1026.9,261.0 1034.8,246.0 1042.7,261.0 1050.6,261.0 1058.5,261.0 1066.4,261.0 1074.3,261.0 1082.2,261.0 1090.1,261.0 1098.0,261.0 1105.9,246.0 1113.8,261.0 1121.8,261.0 1129.7,261.0 1137.6,261.0 1145.5,261.0 1153.4,261.0 1161.3,261.0 1169.2,261.0 1177.1,261.0 1185.0,261.0 1192.9,261.0 1200.8,246.0 1208.7,261.0 1216.6,261.0 1224.5,261.0 1232.4,261.0 1240.3,261.0 1248.2,261.0 1256.1,261.0 1264.0,261.0 1271.9,261.0 1279.8,261.0 1287.7,261.0 1295.6,261.0 1303.5,261.0 1311.4,261.0 1319.3,261.0 1327.2,261.0 1335.1,261.0 1343.0,261.0 1350.9,261.0 1358.9,261.0 1366.8,261.0 1374.7,246.0 1382.6,261.0 1390.5,261.0 1398.4,261.0 1406.3,261.0 1414.2,261.0 1422.1,261.0 1430.0,261.0 1437.9,261.0 1445.8,246.0 1453.7,261.0 1461.6,261.0 1469.5,261.0 1477.4,246.0 1485.3,261.0 1493.2,246.0 1501.1,261.0 1509.0,261.0 1516.9,261.0 1524.8,261.0 1532.7,261.0 1540.6,261.0 1548.5,261.0 1556.4,261.0 1564.3,261.0 1572.2,261.0 1580.1,261.0 1588.0,261.0 1596.0,261.0 1603.9,261.0 1611.8,261.0 1619.7,261.0 1627.6,261.0 1635.5,246.0 1643.4,261.0 1651.3,261.0 1659.2,261.0 1667.1,261.0 1675.0,261.0 1682.9,261.0 1690.8,261.0 1698.7,261.0 1706.6,261.0 1714.5,261.0 1716.0,261.0" fill="none" stroke="#87ceeb" stroke-width="3.6" stroke-linejoin="miter"/>
<path d="M1716 261.5 H1853.5" stroke="#fff" stroke-width="1"/>
<path d="M1853.5 222 V300" stroke="#fff" stroke-width="1.4"/>
<path d="M1853.5 239.0 h10.8 M1853.5 261.5 h10.8 M1853.5 283.5 h10.8 M1853.5 228.5 h4.5 M1853.5 250.5 h4.5 M1853.5 272.5 h4.5 M1853.5 294.5 h4.5 " stroke="#fff" stroke-width="1.25"/>
<path d="M34 384.9 H1853.5 M34 417.4 H1853.5 M34 450.0 H1853.5 M34 482.5 H1853.5 " stroke="#0c0c0c" stroke-width="1.6" stroke-dasharray="4 3.5"/>
<polyline points="34.6,395.5 57.0,397.6 71.7,408.0 86.3,418.4 94.6,413.2 103.0,415.3 113.3,431.0 121.7,441.3 134.2,453.8 149.8,462.6 163.3,457.6 175.8,458.0 188.3,456.0 196.7,452.2 205.0,462.6 213.0,467.4 221.7,461.0 230.0,451.8 236.3,443.4 250.8,446.5 259.0,442.4 275.8,447.2 284.2,447.2 296.7,435.0 307.0,425.7 315.4,436.0 325.8,444.5 334.2,447.2 340.4,445.5 355.0,431.0 371.7,413.2 384.2,417.4 396.7,421.5 403.0,421.5 411.3,415.3 419.6,413.2 432.5,403.8 451.3,403.8 457.5,406.0 474.0,406.0 482.5,413.2 499.0,415.3 509.6,419.5 528.3,423.6 536.7,429.9 545.0,439.3 553.3,445.0 559.6,445.0 570.0,439.7 582.5,443.4 603.3,445.5 620.0,441.3 632.5,441.3 640.8,448.6 647.0,458.0 655.4,461.0 663.8,459.0 678.3,446.5 693.0,442.4 701.3,456.0 711.7,468.4 720.0,468.4 728.3,463.2 740.8,450.7 751.3,441.3 757.5,428.8 770.0,416.3 782.5,410.0 793.0,408.4 803.3,408.4 811.7,404.9 820.4,402.8 830.8,402.8 839.0,407.0 851.7,420.5 860.0,428.8 866.3,429.9 872.5,423.6 880.8,415.3 891.3,410.0 916.3,410.0 923.5,412.2 939.0,404.9 947.5,404.9 955.8,411.0 964.2,417.4 983.0,417.4 994.4,420.0 1008.0,415.3 1028.8,417.4 1043.3,416.3 1053.8,422.6 1064.2,433.0 1074.6,439.7 1085.0,439.7 1101.7,435.5 1118.3,435.0 1135.0,437.0 1151.7,442.4 1168.3,449.3 1183.0,448.6 1193.3,447.2 1201.7,436.0 1208.3,428.8 1218.8,421.5 1231.3,421.5 1248.0,411.8 1264.6,409.7 1287.5,398.6 1302.0,399.7 1318.8,394.5 1333.3,397.2 1352.0,400.0 1368.8,407.0 1389.6,411.8 1404.2,421.5 1420.8,427.8 1433.3,432.0 1445.8,429.9 1458.3,432.0 1469.8,439.7 1479.0,435.0 1487.5,431.0 1498.0,424.7 1517.7,418.4 1533.3,421.5 1554.2,425.0 1566.7,427.8 1583.3,427.8 1593.8,435.0 1604.0,438.6 1612.5,438.6 1618.8,436.0 1627.0,437.6 1635.4,435.0 1643.8,427.8 1662.5,424.7 1673.0,431.0 1687.5,435.0 1698.0,439.3 1708.3,441.8 1713.5,441.0" fill="none" stroke="#f6f6dc" stroke-width="1.1"/>
<polyline points="34.6,436.0 46.7,437.0 50.8,437.0 63.3,432.6 68.5,429.9 80.0,429.3 86.3,427.8 90.4,435.0 94.2,440.3 97.7,435.5 101.9,430.5 111.3,427.8 148.8,427.8 155.0,430.9 160.2,434.0 165.4,434.0 172.7,427.8 180.0,433.0 188.3,436.0 196.7,436.0 205.0,427.8 213.3,427.8 217.5,435.0 228.0,439.7 236.3,439.7 242.5,435.0 255.0,435.0 259.0,436.0 267.5,429.9 275.8,427.8 284.2,427.8 289.4,437.0 293.5,439.7 308.0,439.7 315.4,427.8 332.0,427.8 338.3,433.0 348.8,439.7 371.7,439.7 382.0,435.0 396.7,435.0 411.3,439.7 447.0,439.7 457.5,436.0 468.0,436.0 474.6,439.7 481.5,427.8 486.7,431.0 493.0,434.7 498.0,436.0 504.4,427.8 514.8,431.0 529.4,439.7 536.7,427.8 555.4,427.8 563.8,432.0 569.0,436.0 576.3,429.9 601.3,429.9 607.5,429.3 614.8,433.0 626.3,431.0 640.8,427.8 655.4,427.8 661.7,429.3 679.4,439.7 688.8,435.0 701.3,428.4 711.7,428.4 720.0,429.9 730.4,433.0 743.0,439.7 774.2,439.7 782.5,436.0 797.0,434.7 809.6,439.7 830.8,439.7 841.3,431.0 855.8,429.3 862.0,427.8 869.4,435.5 878.8,436.5 885.0,439.7 893.3,436.0 901.7,436.0 908.0,439.7 918.3,439.7 923.5,434.0 930.8,439.7 947.5,439.7 955.8,429.9 964.2,429.9 970.4,435.5 987.0,434.0 1001.7,439.7 1012.0,439.7 1018.3,436.0 1026.7,436.0 1035.0,439.7 1043.3,439.7 1050.6,427.8 1076.7,427.8 1080.8,431.0 1089.0,435.0 1101.7,435.0 1107.0,439.7 1116.3,435.0 1128.8,428.4 1135.0,431.0 1143.3,431.0 1153.8,427.8 1172.5,427.8 1180.8,431.0 1189.0,427.8 1195.4,433.0 1201.7,439.7 1216.7,439.7 1225.0,436.0 1233.0,435.5 1239.6,439.7 1248.0,439.7 1256.0,436.0 1264.6,439.7 1295.8,439.7 1304.0,436.0 1312.5,439.7 1333.3,439.7 1343.8,436.0 1352.0,439.7 1360.4,439.7 1367.7,429.9 1375.0,439.7 1383.3,439.7 1390.6,427.8 1408.3,427.8 1416.7,429.9 1421.9,427.8 1435.4,431.3 1445.8,436.0 1456.3,429.3 1470.8,427.8 1477.0,435.0 1485.4,439.7 1518.8,439.7 1527.0,435.0 1535.4,433.0 1550.0,433.0 1557.3,429.9 1564.6,433.0 1573.0,436.0 1581.3,436.0 1589.6,427.8 1606.3,427.8 1613.5,431.0 1620.8,435.5 1627.0,429.9 1635.4,435.0 1643.8,439.7 1652.0,439.7 1660.4,436.0 1673.0,434.0 1683.3,427.8 1691.7,429.9 1700.0,427.8 1708.3,427.8" fill="none" stroke="#f0f000" stroke-width="1.3"/>
<polyline points="34.6,439.0 39.0,449.3 46.9,433.0 54.8,449.3 62.7,433.0 70.6,433.0 78.5,433.0 86.4,433.0 94.3,433.0 102.2,433.0 110.1,433.0 118.0,433.0 125.9,433.0 133.8,433.0 141.7,433.0 149.6,433.0 157.5,416.7 165.5,433.0 173.4,433.0 181.3,424.1 189.2,433.0 197.1,433.0 205.0,433.0 212.9,433.0 220.8,400.5 228.7,433.0 236.6,433.0 244.5,433.0 252.4,433.0 260.3,433.0 268.2,433.0 276.1,433.0 284.0,433.0 291.9,433.0 299.8,433.0 307.7,433.0 315.6,433.0 323.5,433.0 331.4,433.0 339.3,424.1 347.2,433.0 355.1,433.0 363.0,433.0 370.9,433.0 378.8,447.6 386.7,433.0 394.6,433.0 402.6,433.0 410.5,433.0 418.4,433.0 426.3,433.0 434.2,433.0 442.1,433.0 450.0,465.5 457.9,433.0 465.8,433.0 473.7,433.0 481.6,433.0 489.5,433.0 497.4,433.0 505.3,433.0 513.2,433.0 521.1,433.0 529.0,433.0 536.9,433.0 544.8,433.0 552.7,433.0 560.6,426.5 568.5,433.0 576.4,433.0 584.3,433.0 592.2,433.0 600.1,433.0 608.0,424.9 615.9,433.0 623.8,433.0 631.7,433.0 639.7,433.0 647.6,433.0 655.5,433.0 663.4,401.3 671.3,433.0 679.2,433.0 687.1,433.0 695.0,433.0 702.9,433.0 710.8,433.0 718.7,401.3 726.6,433.0 734.5,433.0 742.4,433.0 750.3,433.0 758.2,433.0 766.1,433.0 774.0,433.0 781.9,433.0 789.8,433.0 797.7,433.0 805.6,447.6 813.5,433.0 821.4,433.0 829.3,433.0 837.2,448.6 845.1,433.0 853.0,433.0 860.9,433.0 868.8,433.0 876.7,433.0 884.7,433.0 892.6,433.0 900.5,448.6 908.4,433.0 916.3,433.0 924.2,448.6 932.1,433.0 940.0,433.0 947.9,448.6 955.8,433.0 963.7,433.0 971.6,433.0 979.5,433.0 987.4,440.8 995.3,433.0 1003.2,433.0 1011.1,433.0 1019.0,440.8 1026.9,433.0 1034.8,433.0 1042.7,433.0 1050.6,433.0 1058.5,433.0 1066.4,433.0 1074.3,433.0 1082.2,425.7 1090.1,433.0 1098.0,433.0 1105.9,433.0 1113.8,433.0 1121.8,433.0 1129.7,433.0 1137.6,433.0 1145.5,433.0 1153.4,433.0 1161.3,433.0 1169.2,433.0 1177.1,418.0 1185.0,433.0 1192.9,418.0 1200.8,433.0 1208.7,433.0 1216.6,433.0 1224.5,433.0 1232.4,446.5 1240.3,433.0 1248.2,433.0 1256.1,433.0 1264.0,433.0 1271.9,433.0 1279.8,433.0 1287.7,433.0 1295.6,465.5 1303.5,433.0 1311.4,433.0 1319.3,433.0 1327.2,465.5 1335.1,433.0 1343.0,433.0 1350.9,433.0 1358.9,433.0 1366.8,433.0 1374.7,433.0 1382.6,433.0 1390.5,433.0 1398.4,433.0 1406.3,433.0 1414.2,433.0 1422.1,433.0 1430.0,433.0 1437.9,433.0 1445.8,433.0 1453.7,433.0 1461.6,433.0 1469.5,433.0 1477.4,433.0 1485.3,433.0 1493.2,433.0 1501.1,433.0 1509.0,433.0 1516.9,433.0 1524.8,440.8 1532.7,433.0 1540.6,433.0 1548.5,433.0 1556.4,433.0 1564.3,433.0 1572.2,433.0 1580.1,433.0 1588.0,433.0 1596.0,433.0 1603.9,433.0 1611.8,426.5 1619.7,433.0 1627.6,433.0 1635.5,433.0 1643.4,433.0 1651.3,433.0 1659.2,433.0 1667.1,439.5 1675.0,433.0 1682.9,433.0 1690.8,433.0 1698.7,433.0 1706.6,433.0" fill="none" stroke="#000" stroke-width="2.2" stroke-linejoin="miter"/>
<polyline points="34.4,510.0 39.0,523.2 46.9,523.2 54.8,539.5 62.7,539.5 70.6,539.5 78.5,539.5 86.4,539.5 94.3,539.5 102.2,539.5 110.1,539.5 118.0,539.5 125.9,539.5 133.8,539.5 141.7,539.5 149.6,539.5 157.5,417.4 165.5,417.4 173.4,417.4 181.3,409.3 189.2,409.3 197.1,409.3 205.0,409.3 212.9,409.3 220.8,376.8 228.7,376.8 236.6,376.8 244.5,376.8 252.4,376.8 260.3,376.8 268.2,376.8 276.1,376.8 284.0,376.8 291.9,376.8 299.8,376.8 307.7,376.8 315.6,376.8 323.5,376.8 331.4,376.8 339.3,368.6 347.2,368.6 355.1,368.6 363.0,368.6 370.9,368.6 378.8,450.0 386.7,450.0 394.6,450.0 402.6,450.0 410.5,450.0 418.4,450.0 426.3,450.0 434.2,450.0 442.1,450.0 450.0,482.5 457.9,482.5 465.8,482.5 473.7,482.5 481.6,482.5 489.5,482.5 497.4,482.5 505.3,482.5 513.2,482.5 521.1,482.5 529.0,482.5 536.9,482.5 544.8,482.5 552.7,482.5 560.6,425.6 568.5,425.6 576.4,425.6 584.3,425.6 592.2,425.6 600.1,425.6 608.0,417.4 615.9,417.4 623.8,417.4 631.7,417.4 639.7,417.4 647.6,417.4 655.5,417.4 663.4,384.9 671.3,384.9 679.2,384.9 687.1,384.9 695.0,384.9 702.9,384.9 710.8,384.9 718.7,352.4 726.6,352.4 734.5,352.4 742.4,352.4 750.3,352.4 758.2,352.4 766.1,352.4 774.0,352.4 781.9,352.4 789.8,352.4 797.7,352.4 805.6,450.0 813.5,450.0 821.4,450.0 829.3,450.0 837.2,466.2 845.1,466.2 853.0,466.2 860.9,466.2 868.8,466.2 876.7,466.2 884.7,466.2 892.6,466.2 900.5,482.5 908.4,482.5 916.3,482.5 924.2,498.8 932.1,498.8 940.0,498.8 947.9,515.0 955.8,515.0 963.7,515.0 971.6,515.0 979.5,515.0 987.4,523.2 995.3,523.2 1003.2,523.2 1011.1,523.2 1019.0,531.3 1026.9,531.3 1034.8,531.3 1042.7,531.3 1050.6,531.3 1058.5,531.3 1066.4,531.3 1074.3,531.3 1082.2,425.6 1090.1,425.6 1098.0,425.6 1105.9,425.6 1113.8,425.6 1121.8,425.6 1129.7,425.6 1137.6,425.6 1145.5,425.6 1153.4,425.6 1161.3,425.6 1169.2,425.6 1177.1,409.3 1185.0,409.3 1192.9,393.0 1200.8,393.0 1208.7,393.0 1216.6,393.0 1224.5,393.0 1232.4,450.0 1240.3,450.0 1248.2,450.0 1256.1,450.0 1264.0,450.0 1271.9,450.0 1279.8,450.0 1287.7,450.0 1295.6,482.5 1303.5,482.5 1311.4,482.5 1319.3,482.5 1327.2,515.0 1335.1,515.0 1343.0,515.0 1350.9,515.0 1358.9,515.0 1366.8,515.0 1374.7,515.0 1382.6,515.0 1390.5,515.0 1398.4,515.0 1406.3,515.0 1414.2,515.0 1422.1,515.0 1430.0,515.0 1437.9,515.0 1445.8,515.0 1453.7,515.0 1461.6,515.0 1469.5,515.0 1477.4,515.0 1485.3,515.0 1493.2,515.0 1501.1,515.0 1509.0,515.0 1516.9,515.0 1524.8,523.2 1532.7,523.2 1540.6,523.2 1548.5,523.2 1556.4,523.2 1564.3,523.2 1572.2,523.2 1580.1,523.2 1588.0,523.2 1596.0,523.2 1603.9,523.2 1611.8,425.6 1619.7,425.6 1627.6,425.6 1635.5,425.6 1643.4,425.6 1651.3,425.6 1659.2,425.6 1667.1,441.8 1675.0,441.8 1682.9,441.8 1690.8,441.8 1698.7,441.8 1706.6,441.8 1714.5,417.4" fill="none" stroke="#990000" stroke-width="4" stroke-linejoin="round"/>
<path d="M1853.5 333 V557" stroke="#fff" stroke-width="1.4"/>
<path d="M1853.5 336.1 h10.8 M1853.5 352.4 h10.8 M1853.5 368.6 h10.8 M1853.5 384.9 h10.8 M1853.5 401.2 h10.8 M1853.5 417.4 h10.8 M1853.5 433.7 h10.8 M1853.5 450.0 h10.8 M1853.5 466.2 h10.8 M1853.5 482.5 h10.8 M1853.5 498.8 h10.8 M1853.5 515.0 h10.8 M1853.5 531.3 h10.8 M1853.5 547.6 h10.8 M1853.5 344.2 h4.5 M1853.5 360.5 h4.5 M1853.5 376.8 h4.5 M1853.5 393.0 h4.5 M1853.5 409.3 h4.5 M1853.5 425.6 h4.5 M1853.5 441.8 h4.5 M1853.5 458.1 h4.5 M1853.5 474.4 h4.5 M1853.5 490.6 h4.5 M1853.5 506.9 h4.5 M1853.5 523.2 h4.5 M1853.5 539.5 h4.5 M1853.5 555.7 h4.5 " stroke="#fff" stroke-width="1.25"/>
<path d="M39.2 754.2 V772.5 M63.2 757.5 V768.7 M70.2 761.7 V770.3 M86.2 765.0 V773.3 M102.2 749.2 V766.7 M110.2 766.7 V793.3 M126.2 789.2 V799.2 M134.2 793.0 V807.5 M142.2 802.0 V809.2 M157.2 800.8 V812.5 M165.2 806.7 V814.2 M173.2 809.2 V820.8 M189.2 804.7 V813.3 M205.2 827.0 V853.3 M244.2 812.5 V827.0 M268.2 813.3 V842.5 M315.2 823.3 V849.2 M379.2 795.8 V809.2 M387.2 804.7 V814.2 M418.2 783.3 V799.2 M434.2 773.0 V781.7 M481.2 769.2 V785.0 M505.2 763.0 V776.7 M529.2 760.3 V771.7 M537.2 778.0 V791.7 M545.2 785.3 V794.7 M576.2 780.8 V790.0 M584.2 789.7 V795.8 M592.2 781.7 V794.2 M624.2 785.8 V793.3 M632.2 790.8 V800.8 M639.2 800.8 V816.7 M647.2 822.5 V838.3 M663.2 810.0 V822.5 M695.2 805.8 V818.0 M703.2 837.0 V856.7 M711.2 849.2 V860.0 M726.2 834.2 V849.2 M782.2 790.8 V797.0 M821.2 770.3 V776.7 M837.2 770.3 V776.7 M845.2 775.8 V790.8 M853.2 788.3 V799.2 M861.2 793.3 V809.2 M924.2 748.3 V755.8 M940.2 731.7 V738.3 M948.2 730.8 V745.0 M956.2 738.0 V750.0 M987.2 734.2 V754.7 M1011.2 725.0 V734.2 M1035.2 711.7 V722.0 M1050.2 718.0 V735.3 M1058.2 729.2 V738.3 M1066.2 735.3 V745.8 M1074.2 741.3 V750.0 M1098.2 733.3 V743.0 M1114.2 731.3 V737.5 M1122.2 730.3 V740.0 M1129.2 739.2 V744.7 M1145.2 741.7 V749.2 M1153.2 744.2 V751.7 M1161.2 748.0 V761.3 M1177.2 750.0 V756.7 M1185.2 751.7 V761.7 M1224.2 726.7 V731.7 M1256.2 698.3 V720.0 M1303.2 679.2 V683.3 M1367.2 655.8 V669.2 M1382.2 643.3 V651.7 M1390.2 646.7 V653.3 M1398.2 652.0 V665.0 M1414.2 652.5 V659.2 M1422.2 663.3 V672.5 M1453.2 648.0 V665.8 M1469.2 662.5 V671.7 M1525.2 633.3 V639.2 M1540.2 635.3 V649.2 M1556.2 638.3 V645.8 M1580.2 637.5 V643.3 M1588.2 650.8 V663.3 M1604.2 646.7 V661.7 M1627.2 648.3 V654.2 M1651.2 624.2 V629.2 M1659.2 625.3 V642.5 M1667.2 636.7 V649.2 M1683.2 641.7 V652.5 M1698.2 650.8 V663.3 " stroke="#ff6a20" stroke-width="1.3" fill="none"/>
<path d="M36 758.3 h6.4 v11.7 h-6.4 Z M60 758.0 h6.4 v4.5 h-6.4 Z M67 762.0 h6.4 v6.7 h-6.4 Z M83 765.8 h6.4 v2.5 h-6.4 Z M99 752.0 h6.4 v14.7 h-6.4 Z M107 767.0 h6.4 v24.7 h-6.4 Z M123 789.2 h6.4 v7.5 h-6.4 Z M131 796.7 h6.4 v7.5 h-6.4 Z M139 804.7 h6.4 v2.8 h-6.4 Z M154 806.7 h6.4 v1.6 h-6.4 Z M162 808.3 h6.4 v1.6 h-6.4 Z M170 809.7 h6.4 v4.5 h-6.4 Z M186 807.5 h6.4 v4.2 h-6.4 Z M202 827.0 h6.4 v19.7 h-6.4 Z M241 813.3 h6.4 v13.3 h-6.4 Z M265 819.2 h6.4 v15.8 h-6.4 Z M312 823.3 h6.4 v20.0 h-6.4 Z M376 802.0 h6.4 v1.7 h-6.4 Z M384 804.7 h6.4 v4.0 h-6.4 Z M415 789.2 h6.4 v7.5 h-6.4 Z M431 774.2 h6.4 v1.6 h-6.4 Z M478 775.0 h6.4 v6.7 h-6.4 Z M502 763.3 h6.4 v13.0 h-6.4 Z M526 762.0 h6.4 v7.7 h-6.4 Z M534 778.3 h6.4 v10.8 h-6.4 Z M542 790.0 h6.4 v1.6 h-6.4 Z M573 780.8 h6.4 v8.3 h-6.4 Z M581 789.7 h6.4 v1.6 h-6.4 Z M589 792.5 h6.4 v1.6 h-6.4 Z M621 787.5 h6.4 v3.3 h-6.4 Z M629 790.8 h6.4 v9.2 h-6.4 Z M636 800.8 h6.4 v8.3 h-6.4 Z M644 825.0 h6.4 v6.7 h-6.4 Z M660 815.8 h6.4 v3.3 h-6.4 Z M692 807.0 h6.4 v10.5 h-6.4 Z M700 837.0 h6.4 v13.8 h-6.4 Z M708 852.0 h6.4 v1.6 h-6.4 Z M723 835.8 h6.4 v8.3 h-6.4 Z M779 793.0 h6.4 v1.6 h-6.4 Z M818 772.5 h6.4 v1.6 h-6.4 Z M834 770.8 h6.4 v5.0 h-6.4 Z M842 777.0 h6.4 v13.3 h-6.4 Z M850 790.8 h6.4 v7.5 h-6.4 Z M858 798.3 h6.4 v5.0 h-6.4 Z M921 750.8 h6.4 v4.2 h-6.4 Z M937 732.0 h6.4 v1.6 h-6.4 Z M945 734.2 h6.4 v3.3 h-6.4 Z M953 738.3 h6.4 v9.2 h-6.4 Z M984 738.7 h6.4 v1.7 h-6.4 Z M1008 725.3 h6.4 v5.5 h-6.4 Z M1032 717.5 h6.4 v4.2 h-6.4 Z M1047 718.0 h6.4 v12.8 h-6.4 Z M1055 730.0 h6.4 v6.7 h-6.4 Z M1063 735.3 h6.4 v7.2 h-6.4 Z M1071 743.7 h6.4 v1.6 h-6.4 Z M1095 734.7 h6.4 v2.0 h-6.4 Z M1111 731.3 h6.4 v1.6 h-6.4 Z M1119 733.3 h6.4 v6.3 h-6.4 Z M1126 739.7 h6.4 v4.0 h-6.4 Z M1142 742.0 h6.4 v4.7 h-6.4 Z M1150 746.7 h6.4 v1.7 h-6.4 Z M1158 748.3 h6.4 v12.5 h-6.4 Z M1174 753.7 h6.4 v2.7 h-6.4 Z M1182 756.7 h6.4 v1.7 h-6.4 Z M1221 729.2 h6.4 v2.2 h-6.4 Z M1253 704.2 h6.4 v11.7 h-6.4 Z M1300 680.0 h6.4 v2.5 h-6.4 Z M1364 656.3 h6.4 v5.3 h-6.4 Z M1379 645.0 h6.4 v2.5 h-6.4 Z M1387 647.5 h6.4 v5.0 h-6.4 Z M1395 652.5 h6.4 v9.2 h-6.4 Z M1411 653.3 h6.4 v5.0 h-6.4 Z M1419 665.0 h6.4 v5.0 h-6.4 Z M1450 648.3 h6.4 v15.0 h-6.4 Z M1466 664.2 h6.4 v6.7 h-6.4 Z M1522 637.5 h6.4 v1.7 h-6.4 Z M1537 639.2 h6.4 v1.7 h-6.4 Z M1553 641.3 h6.4 v3.7 h-6.4 Z M1577 638.3 h6.4 v2.5 h-6.4 Z M1585 651.7 h6.4 v9.2 h-6.4 Z M1601 647.0 h6.4 v10.5 h-6.4 Z M1624 649.2 h6.4 v2.5 h-6.4 Z M1648 625.8 h6.4 v2.8 h-6.4 Z M1656 629.7 h6.4 v7.0 h-6.4 Z M1664 637.5 h6.4 v5.8 h-6.4 Z M1680 642.5 h6.4 v5.8 h-6.4 Z M1695 651.3 h6.4 v5.3 h-6.4 Z " fill="#ff6a20"/>
<path d="M47.2 757.5 V760.0 M47.2 771.3 V771.7 M55.2 755.8 V758.3 M55.2 760.0 V762.5 M78.2 765.0 V768.0 M78.2 770.0 V770.8 M94.2 741.7 V750.8 M94.2 762.5 V762.5 M118.2 785.8 V789.7 M118.2 791.3 V794.2 M149.2 805.0 V805.5 M149.2 806.7 V819.2 M181.2 808.3 V808.3 M181.2 814.2 V817.5 M197.2 804.7 V809.7 M197.2 812.5 V815.0 M213.2 832.5 V835.0 M213.2 848.3 V850.0 M221.2 820.8 V820.8 M221.2 835.0 V837.5 M228.2 809.7 V815.0 M228.2 820.8 V827.5 M236.2 810.0 V814.2 M236.2 815.8 V821.7 M252.2 820.0 V824.7 M252.2 827.0 V836.7 M260.2 814.2 V820.0 M260.2 830.8 V832.5 M276.2 825.8 V834.2 M276.2 835.8 V839.2 M284.2 828.3 V834.2 M284.2 835.8 V838.3 M292.2 821.7 V822.5 M292.2 835.0 V835.0 M300.2 811.7 V813.3 M300.2 822.5 V825.0 M308.2 799.2 V806.7 M308.2 811.7 V816.7 M323.2 832.5 V842.5 M323.2 845.0 V847.5 M331.2 834.2 V837.5 M331.2 842.5 V847.5 M339.2 828.3 V835.0 M339.2 836.7 V838.3 M347.2 823.3 V825.0 M347.2 835.8 V836.3 M355.2 811.7 V813.3 M355.2 826.3 V826.7 M363.2 803.3 V803.3 M363.2 814.2 V815.8 M371.2 795.0 V802.0 M371.2 803.7 V807.5 M394.2 808.3 V808.3 M394.2 810.3 V811.3 M402.2 803.0 V803.3 M402.2 808.7 V809.2 M410.2 787.5 V791.7 M410.2 803.3 V809.2 M426.2 775.0 V776.7 M426.2 790.0 V790.3 M442.2 772.5 V773.3 M442.2 775.8 V776.7 M450.2 771.7 V772.5 M450.2 774.2 V775.0 M458.2 769.2 V771.7 M458.2 772.8 V775.8 M466.2 767.5 V768.0 M466.2 771.3 V771.7 M473.2 763.0 V767.5 M473.2 769.2 V770.0 M489.2 764.2 V765.0 M489.2 781.7 V784.2 M497.2 759.2 V764.2 M497.2 765.3 V766.7 M513.2 767.5 V771.7 M513.2 778.3 V779.2 M521.2 762.0 V762.5 M521.2 771.3 V771.7 M553.2 787.5 V789.2 M553.2 792.0 V793.3 M560.2 787.5 V788.3 M560.2 790.0 V791.7 M568.2 778.3 V781.7 M568.2 788.7 V789.2 M600.2 791.7 V793.0 M600.2 795.0 V800.8 M608.2 787.5 V791.7 M608.2 793.3 V795.8 M616.2 787.0 V788.3 M616.2 792.0 V792.5 M655.2 814.2 V816.3 M655.2 826.3 V838.0 M671.2 809.2 V809.7 M671.2 820.3 V820.8 M679.2 804.7 V808.3 M679.2 810.0 V812.5 M687.2 807.0 V807.0 M687.2 808.3 V820.0 M718.2 835.0 V835.8 M718.2 853.3 V854.2 M734.2 835.0 V835.8 M734.2 845.0 V847.5 M742.2 821.7 V824.2 M742.2 835.8 V836.3 M750.2 820.8 V823.3 M750.2 825.0 V827.5 M758.2 796.7 V806.7 M758.2 811.3 V811.7 M766.2 792.5 V795.0 M766.2 807.5 V808.0 M774.2 789.7 V793.0 M774.2 794.2 V796.7 M790.2 791.7 V792.5 M790.2 795.3 V795.8 M798.2 790.3 V791.3 M798.2 793.3 V794.2 M805.2 787.5 V789.2 M805.2 793.0 V794.2 M813.2 768.3 V771.3 M813.2 777.5 V778.0 M829.2 770.0 V770.8 M829.2 773.3 V775.0 M869.2 777.5 V778.3 M869.2 788.7 V789.2 M877.2 769.2 V770.0 M877.2 779.2 V781.7 M884.2 763.7 V765.0 M884.2 770.0 V770.3 M892.2 760.8 V762.0 M892.2 765.0 V767.5 M900.2 754.2 V755.0 M900.2 761.7 V762.5 M908.2 752.5 V753.3 M908.2 755.8 V756.7 M916.2 749.7 V750.8 M916.2 754.2 V755.0 M932.2 732.5 V733.3 M932.2 756.3 V756.7 M963.2 739.2 V740.0 M963.2 750.0 V750.3 M971.2 733.3 V738.7 M971.2 740.3 V741.7 M979.2 736.7 V737.5 M979.2 741.7 V747.5 M995.2 733.3 V734.2 M995.2 741.3 V742.5 M1003.2 724.2 V725.0 M1003.2 735.0 V735.8 M1019.2 726.7 V728.0 M1019.2 731.7 V732.0 M1027.2 718.0 V718.3 M1027.2 728.7 V729.2 M1043.2 715.3 V718.3 M1043.2 722.0 V722.5 M1082.2 737.0 V737.5 M1082.2 745.0 V745.3 M1090.2 731.3 V734.7 M1090.2 736.7 V741.7 M1106.2 730.8 V733.7 M1106.2 737.5 V740.8 M1137.2 734.2 V734.7 M1137.2 745.8 V746.7 M1169.2 754.2 V754.7 M1169.2 760.3 V760.8 M1193.2 757.5 V758.0 M1193.2 760.0 V760.8 M1201.2 734.7 V735.0 M1201.2 742.5 V743.0 M1208.2 732.0 V732.5 M1208.2 736.3 V736.7 M1216.2 728.3 V729.2 M1216.2 732.5 V733.0 M1232.2 729.2 V730.0 M1232.2 732.5 V733.3 M1240.2 708.3 V713.3 M1240.2 731.7 V734.2 M1248.2 697.5 V707.5 M1248.2 713.7 V714.2 M1264.2 704.2 V705.0 M1264.2 716.3 V721.7 M1272.2 689.2 V693.3 M1272.2 705.0 V705.3 M1280.2 689.2 V691.7 M1280.2 694.2 V695.0 M1288.2 680.0 V680.8 M1288.2 692.5 V693.0 M1295.2 679.7 V680.0 M1295.2 681.3 V683.3 M1311.2 665.0 V665.8 M1311.2 673.3 V677.5 M1319.2 656.7 V664.7 M1319.2 666.3 V668.3 M1327.2 663.3 V663.3 M1327.2 665.0 V671.7 M1335.2 658.7 V660.0 M1335.2 665.0 V666.7 M1343.2 655.8 V656.7 M1343.2 660.0 V661.7 M1351.2 651.7 V652.5 M1351.2 657.5 V658.0 M1359.2 646.7 V650.8 M1359.2 653.0 V653.3 M1374.2 644.2 V646.7 M1374.2 656.7 V660.0 M1406.2 653.3 V655.0 M1406.2 662.5 V665.0 M1430.2 656.7 V660.0 M1430.2 670.0 V676.7 M1438.2 656.7 V657.5 M1438.2 660.0 V663.3 M1446.2 646.7 V648.3 M1446.2 658.3 V659.2 M1461.2 658.3 V663.0 M1461.2 664.7 V665.0 M1477.2 653.3 V654.2 M1477.2 663.3 V664.2 M1485.2 649.2 V653.3 M1485.2 655.0 V660.0 M1493.2 644.2 V645.0 M1493.2 654.7 V655.3 M1501.2 638.3 V639.2 M1501.2 643.3 V647.5 M1509.2 637.0 V638.0 M1509.2 640.0 V640.8 M1517.2 636.3 V637.5 M1517.2 639.2 V640.0 M1533.2 638.0 V638.3 M1533.2 640.0 V644.2 M1548.2 640.0 V640.8 M1548.2 643.0 V647.5 M1564.2 639.2 V640.8 M1564.2 645.8 V646.7 M1572.2 639.2 V639.7 M1572.2 641.7 V642.5 M1596.2 640.0 V647.5 M1596.2 652.5 V653.3 M1612.2 649.2 V650.0 M1612.2 658.7 V659.2 M1619.2 645.8 V647.5 M1619.2 650.0 V650.8 M1635.2 643.3 V645.0 M1635.2 653.0 V653.3 M1643.2 621.7 V625.8 M1643.2 640.0 V640.8 M1675.2 640.0 V642.0 M1675.2 645.3 V647.5 M1691.2 645.0 V646.7 M1691.2 650.3 V651.3 M1706.2 652.5 V655.8 M1706.2 658.0 V658.3 M1714.2 650.8 V652.0 M1714.2 656.3 V660.3 " stroke="#7890b8" stroke-width="1.15" fill="none"/>
<path d="M44.6 760.0 h5.2 v11.3 h-5.2 Z M91.6 750.8 h5.2 v11.7 h-5.2 Z M178.6 808.3 h5.2 v5.8 h-5.2 Z M210.6 835.0 h5.2 v13.3 h-5.2 Z M218.6 820.8 h5.2 v14.2 h-5.2 Z M225.6 815.0 h5.2 v5.8 h-5.2 Z M257.6 820.0 h5.2 v10.8 h-5.2 Z M289.6 822.5 h5.2 v12.5 h-5.2 Z M297.6 813.3 h5.2 v9.2 h-5.2 Z M305.6 806.7 h5.2 v5.0 h-5.2 Z M328.6 837.5 h5.2 v5.0 h-5.2 Z M344.6 825.0 h5.2 v10.8 h-5.2 Z M352.6 813.3 h5.2 v13.0 h-5.2 Z M360.6 803.3 h5.2 v10.8 h-5.2 Z M399.6 803.3 h5.2 v5.3 h-5.2 Z M407.6 791.7 h5.2 v11.7 h-5.2 Z M423.6 776.7 h5.2 v13.3 h-5.2 Z M463.6 768.0 h5.2 v3.3 h-5.2 Z M486.6 765.0 h5.2 v16.7 h-5.2 Z M510.6 771.7 h5.2 v6.7 h-5.2 Z M518.6 762.5 h5.2 v8.8 h-5.2 Z M565.6 781.7 h5.2 v7.0 h-5.2 Z M613.6 788.3 h5.2 v3.7 h-5.2 Z M652.6 816.3 h5.2 v10.0 h-5.2 Z M668.6 809.7 h5.2 v10.7 h-5.2 Z M715.6 835.8 h5.2 v17.5 h-5.2 Z M731.6 835.8 h5.2 v9.2 h-5.2 Z M739.6 824.2 h5.2 v11.7 h-5.2 Z M755.6 806.7 h5.2 v4.7 h-5.2 Z M763.6 795.0 h5.2 v12.5 h-5.2 Z M802.6 789.2 h5.2 v3.8 h-5.2 Z M810.6 771.3 h5.2 v6.2 h-5.2 Z M866.6 778.3 h5.2 v10.3 h-5.2 Z M874.6 770.0 h5.2 v9.2 h-5.2 Z M881.6 765.0 h5.2 v5.0 h-5.2 Z M897.6 755.0 h5.2 v6.7 h-5.2 Z M913.6 750.8 h5.2 v3.3 h-5.2 Z M929.6 733.3 h5.2 v23.0 h-5.2 Z M960.6 740.0 h5.2 v10.0 h-5.2 Z M976.6 737.5 h5.2 v4.2 h-5.2 Z M992.6 734.2 h5.2 v7.2 h-5.2 Z M1000.6 725.0 h5.2 v10.0 h-5.2 Z M1016.6 728.0 h5.2 v3.7 h-5.2 Z M1024.6 718.3 h5.2 v10.3 h-5.2 Z M1040.6 718.3 h5.2 v3.7 h-5.2 Z M1079.6 737.5 h5.2 v7.5 h-5.2 Z M1103.6 733.7 h5.2 v3.8 h-5.2 Z M1134.6 734.7 h5.2 v11.2 h-5.2 Z M1166.6 754.7 h5.2 v5.7 h-5.2 Z M1198.6 735.0 h5.2 v7.5 h-5.2 Z M1205.6 732.5 h5.2 v3.8 h-5.2 Z M1213.6 729.2 h5.2 v3.3 h-5.2 Z M1237.6 713.3 h5.2 v18.3 h-5.2 Z M1245.6 707.5 h5.2 v6.2 h-5.2 Z M1261.6 705.0 h5.2 v11.3 h-5.2 Z M1269.6 693.3 h5.2 v11.7 h-5.2 Z M1285.6 680.8 h5.2 v11.7 h-5.2 Z M1308.6 665.8 h5.2 v7.5 h-5.2 Z M1332.6 660.0 h5.2 v5.0 h-5.2 Z M1340.6 656.7 h5.2 v3.3 h-5.2 Z M1348.6 652.5 h5.2 v5.0 h-5.2 Z M1371.6 646.7 h5.2 v10.0 h-5.2 Z M1403.6 655.0 h5.2 v7.5 h-5.2 Z M1427.6 660.0 h5.2 v10.0 h-5.2 Z M1443.6 648.3 h5.2 v10.0 h-5.2 Z M1474.6 654.2 h5.2 v9.2 h-5.2 Z M1490.6 645.0 h5.2 v9.7 h-5.2 Z M1498.6 639.2 h5.2 v4.2 h-5.2 Z M1561.6 640.8 h5.2 v5.0 h-5.2 Z M1593.6 647.5 h5.2 v5.0 h-5.2 Z M1609.6 650.0 h5.2 v8.7 h-5.2 Z M1632.6 645.0 h5.2 v8.0 h-5.2 Z M1640.6 625.8 h5.2 v14.2 h-5.2 Z M1672.6 642.0 h5.2 v3.3 h-5.2 Z M1688.6 646.7 h5.2 v3.7 h-5.2 Z M1711.6 652.0 h5.2 v4.3 h-5.2 Z " fill="#000" stroke="#7890b8" stroke-width="1.15"/>
<path d="M52 758.3 h6.4 v1.8 h-6.4 Z M75 768.0 h6.4 v2.0 h-6.4 Z M115 789.7 h6.4 v1.8 h-6.4 Z M146 805.5 h6.4 v1.8 h-6.4 Z M194 809.7 h6.4 v2.8 h-6.4 Z M233 814.2 h6.4 v1.8 h-6.4 Z M249 824.7 h6.4 v2.3 h-6.4 Z M273 834.2 h6.4 v1.8 h-6.4 Z M281 834.2 h6.4 v1.8 h-6.4 Z M320 842.5 h6.4 v2.5 h-6.4 Z M336 835.0 h6.4 v1.8 h-6.4 Z M368 802.0 h6.4 v1.8 h-6.4 Z M391 808.3 h6.4 v2.0 h-6.4 Z M439 773.3 h6.4 v2.5 h-6.4 Z M447 772.5 h6.4 v1.8 h-6.4 Z M455 771.7 h6.4 v1.8 h-6.4 Z M470 767.5 h6.4 v1.8 h-6.4 Z M494 764.2 h6.4 v1.8 h-6.4 Z M550 789.2 h6.4 v2.8 h-6.4 Z M557 788.3 h6.4 v1.8 h-6.4 Z M597 793.0 h6.4 v2.0 h-6.4 Z M605 791.7 h6.4 v1.8 h-6.4 Z M676 808.3 h6.4 v1.8 h-6.4 Z M684 807.0 h6.4 v1.8 h-6.4 Z M747 823.3 h6.4 v1.8 h-6.4 Z M771 793.0 h6.4 v1.8 h-6.4 Z M787 792.5 h6.4 v2.8 h-6.4 Z M795 791.3 h6.4 v2.0 h-6.4 Z M826 770.8 h6.4 v2.5 h-6.4 Z M889 762.0 h6.4 v3.0 h-6.4 Z M905 753.3 h6.4 v2.5 h-6.4 Z M968 738.7 h6.4 v1.8 h-6.4 Z M1087 734.7 h6.4 v2.0 h-6.4 Z M1190 758.0 h6.4 v2.0 h-6.4 Z M1229 730.0 h6.4 v2.5 h-6.4 Z M1277 691.7 h6.4 v2.5 h-6.4 Z M1292 680.0 h6.4 v1.8 h-6.4 Z M1316 664.7 h6.4 v1.8 h-6.4 Z M1324 663.3 h6.4 v1.8 h-6.4 Z M1356 650.8 h6.4 v2.2 h-6.4 Z M1435 657.5 h6.4 v2.5 h-6.4 Z M1458 663.0 h6.4 v1.8 h-6.4 Z M1482 653.3 h6.4 v1.8 h-6.4 Z M1506 638.0 h6.4 v2.0 h-6.4 Z M1514 637.5 h6.4 v1.8 h-6.4 Z M1530 638.3 h6.4 v1.8 h-6.4 Z M1545 640.8 h6.4 v2.2 h-6.4 Z M1569 639.7 h6.4 v2.0 h-6.4 Z M1616 647.5 h6.4 v2.5 h-6.4 Z M1703 655.8 h6.4 v2.2 h-6.4 Z " fill="#7890b8"/>
<polyline points="34.0,769.2 39.0,776.7 46.9,762.5 54.8,762.5 62.7,768.7 70.6,776.7 78.5,772.5 86.4,772.5 94.3,750.8 102.2,766.7 110.1,807.5 118.0,798.3 125.9,804.2 133.8,811.7 141.7,815.8 149.6,812.5 157.5,812.5 165.5,815.8 173.4,821.3 181.3,812.5 189.2,816.3 197.1,813.3 205.0,863.7 212.9,842.5 220.8,821.7 228.7,819.2 236.6,821.7 244.5,837.5 252.4,834.2 260.3,825.0 268.2,847.5 276.1,846.3 284.0,841.7 291.9,828.3 299.8,818.3 307.7,808.3 315.6,862.5 323.5,854.2 331.4,844.2 339.3,839.2 347.2,831.7 355.1,817.5 363.0,803.7 370.9,806.3 378.8,811.7 386.7,817.5 394.6,813.3 402.6,805.0 410.5,791.7 418.4,801.3 426.3,775.0 434.2,779.7 442.1,776.3 450.0,774.7 457.9,773.3 465.8,769.2 473.7,768.0 481.6,789.2 489.5,765.8 497.4,764.2 505.3,786.3 513.2,777.5 521.1,765.0 529.0,772.5 536.9,802.5 544.8,800.8 552.7,795.0 560.6,790.8 568.5,780.8 576.4,794.7 584.3,797.5 592.2,798.7 600.1,795.8 608.0,792.5 615.9,791.7 623.8,793.7 631.7,805.0 639.7,815.0 647.6,839.2 655.5,824.2 663.4,827.0 671.3,815.8 679.2,815.0 687.1,811.7 695.0,827.5 702.9,870.0 710.8,863.3 718.7,835.8 726.6,849.7 734.5,841.7 742.4,827.5 750.3,826.7 758.2,806.7 766.1,795.8 774.0,795.0 781.9,798.3 789.8,795.0 797.7,793.0 805.6,790.0 813.5,768.7 821.4,775.0 829.3,773.3 837.2,780.8 845.1,798.3 853.0,804.2 860.9,812.0 868.8,780.0 876.7,769.2 884.7,766.7 892.6,764.2 900.5,759.2 908.4,755.8 916.3,754.7 924.2,760.0 932.1,732.5 940.0,734.2 947.9,746.7 955.8,760.0 963.7,744.2 971.6,741.3 979.5,741.3 987.4,746.7 995.3,738.3 1003.2,728.3 1011.1,736.3 1019.0,731.7 1026.9,720.0 1034.8,725.0 1042.7,722.5 1050.6,739.2 1058.5,744.2 1066.4,750.0 1074.3,750.0 1082.2,738.7 1090.1,737.5 1098.0,741.7 1105.9,738.3 1113.8,737.5 1121.8,745.8 1129.7,750.0 1137.6,736.7 1145.5,752.0 1153.4,753.7 1161.3,768.7 1169.2,759.7 1177.1,760.3 1185.0,763.7 1192.9,762.5 1200.8,731.3 1208.7,730.8 1216.6,729.7 1224.5,735.0 1232.4,733.3 1240.3,711.7 1248.2,707.5 1256.1,724.2 1264.0,711.7 1271.9,696.7 1279.8,693.3 1287.7,684.2 1295.6,683.7 1303.5,685.0 1311.4,666.3 1319.3,665.8 1327.2,666.7 1335.1,662.5 1343.0,659.2 1350.9,655.0 1358.9,653.0 1366.8,661.7 1374.7,648.3 1382.6,654.2 1390.5,660.8 1398.4,671.2 1406.3,659.2 1414.2,662.5 1422.1,677.5 1430.0,664.2 1437.9,661.7 1445.8,652.5 1453.7,675.0 1461.6,670.0 1469.5,678.7 1477.4,654.2 1485.3,655.0 1493.2,645.8 1501.1,642.0 1509.0,640.8 1516.9,640.0 1524.8,642.5 1532.7,642.5 1540.6,645.8 1548.5,643.3 1556.4,651.3 1564.3,643.3 1572.2,642.5 1580.1,643.3 1588.0,660.0 1596.0,651.7 1603.9,667.5 1611.8,654.2 1619.7,652.5 1627.6,656.3 1635.5,646.7 1643.4,622.5 1651.3,630.0 1659.2,642.5 1667.1,655.3 1675.0,647.5 1682.9,656.3 1690.8,651.7 1698.7,663.3 1706.6,660.0 1714.5,656.3" fill="none" stroke="#22c022" stroke-width="1.05"/>
<polyline points="34.0,764.2 39.0,766.7 46.9,752.5 54.8,752.5 62.7,757.5 70.6,768.7 78.5,765.8 86.4,765.8 94.3,742.2 102.2,763.3 110.1,793.3 118.0,784.7 125.9,791.7 133.8,801.7 141.7,806.7 149.6,803.3 157.5,803.3 165.5,806.7 173.4,811.7 181.3,803.3 189.2,807.5 197.1,805.8 205.0,853.3 212.9,831.7 220.8,811.7 228.7,803.3 236.6,807.5 244.5,826.7 252.4,820.8 260.3,812.5 268.2,831.7 276.1,829.2 284.0,827.5 291.9,810.0 299.8,805.0 307.7,798.3 315.6,850.0 323.5,840.0 331.4,830.0 339.3,827.5 347.2,818.3 355.1,806.7 363.0,793.3 370.9,795.0 378.8,800.8 386.7,805.8 394.6,805.0 402.6,798.3 410.5,782.5 418.4,788.3 426.3,764.7 434.2,768.7 442.1,767.5 450.0,769.2 457.9,768.0 465.8,766.3 473.7,765.8 481.6,780.0 489.5,759.2 497.4,755.8 505.3,772.5 513.2,765.0 521.1,755.8 529.0,765.0 536.9,793.0 544.8,790.8 552.7,786.7 560.6,783.3 568.5,774.7 576.4,788.3 584.3,790.0 592.2,791.3 600.1,789.2 608.0,786.7 615.9,784.7 623.8,788.0 631.7,800.0 639.7,809.2 647.6,825.8 655.5,809.2 663.4,811.7 671.3,803.0 679.2,803.3 687.1,802.0 695.0,821.7 702.9,858.3 710.8,853.3 718.7,826.3 726.6,835.8 734.5,829.2 742.4,816.3 750.3,818.0 758.2,798.3 766.1,784.7 774.0,785.8 781.9,789.7 789.8,788.3 797.7,789.2 805.6,785.0 813.5,762.5 821.4,769.7 829.3,768.7 837.2,773.3 845.1,786.7 853.0,795.0 860.9,800.8 868.8,765.8 876.7,758.3 884.7,756.7 892.6,755.3 900.5,750.0 908.4,750.8 916.3,748.7 924.2,750.8 932.1,725.8 940.0,727.0 947.9,735.0 955.8,746.7 963.7,735.8 971.6,732.0 979.5,733.3 987.4,736.3 995.3,728.3 1003.2,718.3 1011.1,724.7 1019.0,724.7 1026.9,713.3 1034.8,717.5 1042.7,715.8 1050.6,730.8 1058.5,733.3 1066.4,742.0 1074.3,740.8 1082.2,732.5 1090.1,730.8 1098.0,734.2 1105.9,730.0 1113.8,729.7 1121.8,737.5 1129.7,740.8 1137.6,729.7 1145.5,743.0 1153.4,748.3 1161.3,760.0 1169.2,752.5 1177.1,753.3 1185.0,756.7 1192.9,755.0 1200.8,725.0 1208.7,725.0 1216.6,725.0 1224.5,730.0 1232.4,730.0 1240.3,706.7 1248.2,697.5 1256.1,708.3 1264.0,695.0 1271.9,682.5 1279.8,683.7 1287.7,673.3 1295.6,675.0 1303.5,678.3 1311.4,658.7 1319.3,658.3 1327.2,660.8 1335.1,655.0 1343.0,653.3 1350.9,649.2 1358.9,648.3 1366.8,654.2 1374.7,639.7 1382.6,642.5 1390.5,648.3 1398.4,656.7 1406.3,649.7 1414.2,653.3 1422.1,667.5 1430.0,654.2 1437.9,653.3 1445.8,641.7 1453.7,662.5 1461.6,662.5 1469.5,667.5 1477.4,644.7 1485.3,648.3 1493.2,638.3 1501.1,635.0 1509.0,634.7 1516.9,634.7 1524.8,638.3 1532.7,638.3 1540.6,640.0 1548.5,637.5 1556.4,640.8 1564.3,637.5 1572.2,637.5 1580.1,639.2 1588.0,652.5 1596.0,644.2 1603.9,654.2 1611.8,645.0 1619.7,644.7 1627.6,649.7 1635.5,640.8 1643.4,616.3 1651.3,624.2 1659.2,632.5 1667.1,641.7 1675.0,638.7 1682.9,645.0 1690.8,643.7 1698.7,655.8 1706.6,652.5 1714.5,649.7" fill="none" stroke="#f40000" stroke-width="1.05"/>
<path d="M39.4 902.9 l7.5 -7.3 M49.4 902.9 l7.5 -7.3 M59.4 902.9 l7.5 -7.3 M69.4 902.9 l7.5 -7.3 M79.4 902.9 l7.5 -7.3 M89.4 902.9 l7.5 -7.3 M99.4 902.9 l7.5 -7.3 M109.4 902.9 l7.5 -7.3 M119.4 902.9 l7.5 -7.3 M129.4 902.9 l7.5 -7.3 M139.4 902.9 l7.5 -7.3 M149.4 902.9 l7.5 -7.3 M159.4 902.9 l7.5 -7.3 M169.4 902.9 l7.5 -7.3 M179.4 902.9 l7.5 -7.3 M189.4 902.9 l7.5 -7.3 M369.4 902.9 l7.5 -7.3 M379.4 902.9 l7.5 -7.3 M389.4 902.9 l7.5 -7.3 M399.4 902.9 l7.5 -7.3 M409.4 902.9 l7.5 -7.3 M419.4 902.9 l7.5 -7.3 M429.4 902.9 l7.5 -7.3 M439.4 902.9 l7.5 -7.3 M449.4 902.9 l7.5 -7.3 M459.4 902.9 l7.5 -7.3 M469.4 902.9 l7.5 -7.3 M479.4 902.9 l7.5 -7.3 M489.4 902.9 l7.5 -7.3 M499.4 902.9 l7.5 -7.3 M509.4 902.9 l7.5 -7.3 M519.4 902.9 l7.5 -7.3 M529.4 902.9 l7.5 -7.3 M539.4 902.9 l7.5 -7.3 M549.4 902.9 l7.5 -7.3 M559.4 902.9 l7.5 -7.3 M569.4 902.9 l7.5 -7.3 M579.4 902.9 l7.5 -7.3 M589.4 902.9 l7.5 -7.3 M599.4 902.9 l7.5 -7.3 M609.4 902.9 l7.5 -7.3 M619.4 902.9 l7.5 -7.3 M789.4 902.9 l7.5 -7.3 M799.4 902.9 l7.5 -7.3 M809.4 902.9 l7.5 -7.3 M819.4 902.9 l7.5 -7.3 M829.4 902.9 l7.5 -7.3 M839.4 902.9 l7.5 -7.3 M849.4 902.9 l7.5 -7.3 M859.4 902.9 l7.5 -7.3 M869.4 902.9 l7.5 -7.3 M879.4 902.9 l7.5 -7.3 M889.4 902.9 l7.5 -7.3 M899.4 902.9 l7.5 -7.3 M909.4 902.9 l7.5 -7.3 M919.4 902.9 l7.5 -7.3 M929.4 902.9 l7.5 -7.3 M939.4 902.9 l7.5 -7.3 M949.4 902.9 l7.5 -7.3 M959.4 902.9 l7.5 -7.3 M969.4 902.9 l7.5 -7.3 M979.4 902.9 l7.5 -7.3 M989.4 902.9 l7.5 -7.3 M999.4 902.9 l7.5 -7.3 M1009.4 902.9 l7.5 -7.3 M1019.4 902.9 l7.5 -7.3 M1029.4 902.9 l7.5 -7.3 M1039.4 902.9 l7.5 -7.3 M1049.4 902.9 l7.5 -7.3 M1059.4 902.9 l7.5 -7.3 M1069.4 902.9 l7.5 -7.3 M1079.4 902.9 l7.5 -7.3 M1089.4 902.9 l7.5 -7.3 M1099.4 902.9 l7.5 -7.3 M1109.4 902.9 l7.5 -7.3 M1119.4 902.9 l7.5 -7.3 M1129.4 902.9 l7.5 -7.3 M1139.4 902.9 l7.5 -7.3 M1149.4 902.9 l7.5 -7.3 M1159.4 902.9 l7.5 -7.3 M1169.4 902.9 l7.5 -7.3 M1179.4 902.9 l7.5 -7.3 M1189.4 902.9 l7.5 -7.3 M1199.4 902.9 l7.5 -7.3 M1209.4 902.9 l7.5 -7.3 M1219.4 902.9 l7.5 -7.3 M1229.4 902.9 l7.5 -7.3 M1239.4 902.9 l7.5 -7.3 M1249.4 902.9 l7.5 -7.3 M1259.4 902.9 l7.5 -7.3 M1269.4 902.9 l7.5 -7.3 M1279.4 902.9 l7.5 -7.3 M1289.4 902.9 l7.5 -7.3 M1299.4 902.9 l7.5 -7.3 M1309.4 902.9 l7.5 -7.3 M1319.4 902.9 l7.5 -7.3 M1329.4 902.9 l7.5 -7.3 M1339.4 902.9 l7.5 -7.3 M1349.4 902.9 l7.5 -7.3 M1359.4 902.9 l7.5 -7.3 M1369.4 902.9 l7.5 -7.3 M1379.4 902.9 l7.5 -7.3 M1389.4 902.9 l7.5 -7.3 M1399.4 902.9 l7.5 -7.3 M1409.4 902.9 l7.5 -7.3 M1419.4 902.9 l7.5 -7.3 M1429.4 902.9 l7.5 -7.3 M1439.4 902.9 l7.5 -7.3 M1449.4 902.9 l7.5 -7.3 M1459.4 902.9 l7.5 -7.3 M1469.4 902.9 l7.5 -7.3 M1479.4 902.9 l7.5 -7.3 M1489.4 902.9 l7.5 -7.3 M1499.4 902.9 l7.5 -7.3 M1509.4 902.9 l7.5 -7.3 M1519.4 902.9 l7.5 -7.3 M1529.4 902.9 l7.5 -7.3 M1539.4 902.9 l7.5 -7.3 M1549.4 902.9 l7.5 -7.3 M1559.4 902.9 l7.5 -7.3 M1569.4 902.9 l7.5 -7.3 M1579.4 902.9 l7.5 -7.3 M1589.4 902.9 l7.5 -7.3 M1599.4 902.9 l7.5 -7.3 M1609.4 902.9 l7.5 -7.3 M1619.4 902.9 l7.5 -7.3 M1629.4 902.9 l7.5 -7.3 M1639.4 902.9 l7.5 -7.3 M1649.4 902.9 l7.5 -7.3 M1659.4 902.9 l7.5 -7.3 M1669.4 902.9 l7.5 -7.3 M1679.4 902.9 l7.5 -7.3 " stroke="#009000" stroke-width="1.2" fill="none"/>
<path d="M201.9 895.6 l7.5 7.3 M211.9 895.6 l7.5 7.3 M221.9 895.6 l7.5 7.3 M231.9 895.6 l7.5 7.3 M241.9 895.6 l7.5 7.3 M251.9 895.6 l7.5 7.3 M261.9 895.6 l7.5 7.3 M271.9 895.6 l7.5 7.3 M281.9 895.6 l7.5 7.3 M291.9 895.6 l7.5 7.3 M301.9 895.6 l7.5 7.3 M311.9 895.6 l7.5 7.3 M321.9 895.6 l7.5 7.3 M331.9 895.6 l7.5 7.3 M341.9 895.6 l7.5 7.3 M351.9 895.6 l7.5 7.3 M631.9 895.6 l7.5 7.3 M641.9 895.6 l7.5 7.3 M651.9 895.6 l7.5 7.3 M661.9 895.6 l7.5 7.3 M671.9 895.6 l7.5 7.3 M681.9 895.6 l7.5 7.3 M691.9 895.6 l7.5 7.3 M701.9 895.6 l7.5 7.3 M711.9 895.6 l7.5 7.3 M721.9 895.6 l7.5 7.3 M731.9 895.6 l7.5 7.3 M741.9 895.6 l7.5 7.3 M751.9 895.6 l7.5 7.3 M761.9 895.6 l7.5 7.3 M771.9 895.6 l7.5 7.3 M1701.9 895.6 l7.5 7.3 M1711.9 895.6 l7.5 7.3 " stroke="#d00000" stroke-width="1.2" fill="none"/>
<path d="M111.7 896 H120 M272.5 896 H281 M487.5 896 H494 M700.8 896 H707.5 M1234 896 H1241 M1702 896 H1709 " stroke="#0000c8" stroke-width="1.6"/>
<path d="M789.7 222 V300 M789.7 333 V557 M789.7 590 V895" stroke="#32b432" stroke-width="1.5"/>
<path d="M789.7 136 V188" stroke="#32b432" stroke-width="1"/>
<path d="M1698.5 136 V188 M1698.5 222 V300 M1698.5 333 V557 M1698.5 590 V903" stroke="#ff0000" stroke-width="1.5"/>
<path d="M788.3 829 L800 842 H792.4 V858 H784.2 V842 H776.5 Z" fill="#009a00"/>
<path d="M1694 599 H1701.8 V615.8 H1709.3 L1697.8 628.2 L1685.3 615.8 H1694 Z" fill="#ff0000"/>
<path d="M1853.5 590 h12" stroke="#fff" stroke-width="1.3"/>
<path d="M1853.5 590 V895" stroke="#fff" stroke-width="1.4"/>
<path d="M1853.5 592.0 h10.8 M1853.5 617.3 h10.8 M1853.5 642.6 h10.8 M1853.5 667.9 h10.8 M1853.5 693.2 h10.8 M1853.5 718.5 h10.8 M1853.5 743.8 h10.8 M1853.5 769.1 h10.8 M1853.5 794.4 h10.8 M1853.5 819.7 h10.8 M1853.5 845.0 h10.8 M1853.5 870.3 h10.8 M1853.5 597.1 h4.5 M1853.5 602.1 h4.5 M1853.5 607.2 h4.5 M1853.5 612.2 h4.5 M1853.5 622.4 h4.5 M1853.5 627.4 h4.5 M1853.5 632.5 h4.5 M1853.5 637.5 h4.5 M1853.5 647.7 h4.5 M1853.5 652.7 h4.5 M1853.5 657.8 h4.5 M1853.5 662.8 h4.5 M1853.5 673.0 h4.5 M1853.5 678.0 h4.5 M1853.5 683.1 h4.5 M1853.5 688.1 h4.5 M1853.5 698.3 h4.5 M1853.5 703.3 h4.5 M1853.5 708.4 h4.5 M1853.5 713.4 h4.5 M1853.5 723.6 h4.5 M1853.5 728.6 h4.5 M1853.5 733.7 h4.5 M1853.5 738.7 h4.5 M1853.5 748.9 h4.5 M1853.5 753.9 h4.5 M1853.5 759.0 h4.5 M1853.5 764.0 h4.5 M1853.5 774.2 h4.5 M1853.5 779.2 h4.5 M1853.5 784.3 h4.5 M1853.5 789.3 h4.5 M1853.5 799.5 h4.5 M1853.5 804.5 h4.5 M1853.5 809.6 h4.5 M1853.5 814.6 h4.5 M1853.5 824.8 h4.5 M1853.5 829.8 h4.5 M1853.5 834.9 h4.5 M1853.5 839.9 h4.5 M1853.5 850.1 h4.5 M1853.5 855.1 h4.5 M1853.5 860.2 h4.5 M1853.5 865.2 h4.5 M1853.5 875.4 h4.5 M1853.5 880.4 h4.5 M1853.5 885.5 h4.5 M1853.5 890.5 h4.5 " stroke="#fff" stroke-width="1.25"/>
<path d="M34 903.6 H1854 M34 923.6 H1854" stroke="#f4f4f4" stroke-width="1.5"/>
<path d="M38.3 904 V923 M315.0 904 V923 M536.4 904 V923 M813.1 904 V923 M1089.8 904 V923 M1643.2 904 V923 M259.7 904 V943 M1366.5 904 V943 " stroke="#f4f4f4" stroke-width="1.5"/>
<g fill="none" stroke="#ff2020" stroke-width="1.5"><circle cx="1883.3" cy="923" r="10"/><path d="M1877.5 929.5 Q1883.3 922.5 1889 929.5"/></g><circle cx="1879.6" cy="919.3" r="1.6" fill="#ff2020"/><circle cx="1887" cy="919.3" r="1.6" fill="#ff2020"/>
<path d="M4 94 Q12 78 26 86" stroke="#f0a060" stroke-width="1.2" fill="none" opacity=".7"/><circle cx="14" cy="88" r="8.5" fill="#3a2a26" opacity=".75"/>
<path d="M40.5 68 V105" stroke="#b8b8b8"/><path d="M41.5 68 V105" stroke="#fafafa"/>
<path d="M65.5 78.5 H78 L83.5 84 V98.5 H65.5 Z" fill="#fff" stroke="#8c8c8c" stroke-width="1.4" stroke-linejoin="round"/><path d="M67.5 81 H77 V85 H81.5 V96.5 H67.5 Z" fill="#9cc8e6"/><path d="M78 78.5 V84 H83.5" fill="#f4f4f4" stroke="#8c8c8c" stroke-width="1"/>
<path d="M99 81 H106 L108 83 H116 V86 H99 Z" fill="#f4f4f4" stroke="#8c8c8c" stroke-width="1.2"/><path d="M99 95.5 V84 H116 V88" fill="#fafafa" stroke="#8c8c8c" stroke-width="1.2"/><path d="M99 95.5 L103.5 88 H120 L115.5 95.5 Z" fill="#a8c4e0" stroke="#6a86a6" stroke-width="1.2" stroke-linejoin="round"/>
<path d="M132 78 H150 L153 81 V98.5 H132 Z" fill="#f6f6f6" stroke="#8c8c8c" stroke-width="1.4" stroke-linejoin="round"/><rect x="135" y="79" width="14" height="9" fill="#f0808a"/><rect x="135.5" y="91" width="13" height="7" fill="#9a9a9a"/><rect x="144" y="92.5" width="2.5" height="4.5" fill="#e8e8e8"/>
<path d="M162.5 74.5 V101.5" stroke="#7a7a7a" stroke-width="1"/><path d="M163.5 74.5 V101.5" stroke="#f8f8f8" stroke-width="1"/>
<rect x="173" y="79" width="20" height="8" rx="1.5" fill="#fafafa" stroke="#8c8c8c" stroke-width="1.4"/><rect x="176.5" y="86" width="13.5" height="12.5" fill="#fff" stroke="#8c8c8c" stroke-width="1.4"/><path d="M179 90 H186 M179 92.5 H184 M179 95 H187" stroke="#6a9a6a" stroke-width="1.2"/><rect x="189" y="80.5" width="2" height="2" fill="#3cb043"/>
<rect x="206.5" y="78" width="12" height="14" fill="#f2f2f2" stroke="#9a9a9a" stroke-width="1"/><circle cx="216.5" cy="86.5" r="5.6" fill="#a8d0f0" stroke="#3a3a3a" stroke-width="2.2"/><path d="M220.5 91 L226 98" stroke="#2a2a2a" stroke-width="3" stroke-linecap="round"/>
<path d="M237.5 74.5 V101.5" stroke="#7a7a7a" stroke-width="1"/><path d="M238.5 74.5 V101.5" stroke="#f8f8f8" stroke-width="1"/>
<path d="M252.5 78.5 L262.5 93 M264 78.5 L254 93" stroke="#6a6a6a" stroke-width="2.6" stroke-linecap="round"/><circle cx="252.8" cy="94.5" r="2.9" fill="none" stroke="#6a6a6a" stroke-width="1.8"/><circle cx="263.5" cy="94.5" r="2.9" fill="none" stroke="#6a6a6a" stroke-width="1.8"/>
<path d="M281.5 78 H289 L292 81 V92 H281.5 Z" fill="#fafafa" stroke="#8c8c8c" stroke-width="1.2"/><path d="M291.5 84.5 H299.5 L302.5 87.5 V98.5 H291.5 Z" fill="#fafafa" stroke="#8c8c8c" stroke-width="1.2"/><path d="M283.5 82 H288 M283.5 84.5 H290 M283.5 87 H290 M283.5 89.5 H290 M293.5 89 H298 M293.5 91.5 H300.5 M293.5 94 H300.5 M293.5 96.5 H300.5" stroke="#b4b4b4" stroke-width="1"/>
<rect x="317" y="80" width="19.5" height="18.5" rx="1.5" fill="#d8d8d8" stroke="#8c8c8c" stroke-width="1.4"/><rect x="320" y="83" width="13.5" height="13" fill="#fdfdfd" stroke="#a4a4a4" stroke-width=".8"/><rect x="322.5" y="76.5" width="8.5" height="6" rx="1" fill="#f0f0f0" stroke="#8c8c8c" stroke-width="1.3"/><path d="M322 88 H327 M322 91 H325" stroke="#9a9a9a" stroke-width="1.2"/>
<path d="M346.5 74.5 V101.5" stroke="#7a7a7a" stroke-width="1"/><path d="M347.5 74.5 V101.5" stroke="#f8f8f8" stroke-width="1"/>
<path d="M358.5 86 L368 80 V84 Q377 85 376.5 92.5 Q376 97.5 368 98.5 Q372.5 95 371 91.5 Q370 89.5 368 89.5 V93 Z" fill="#4a9a4a" stroke="#3a7a3a" stroke-width=".6"/>
<path d="M387.5 74.5 V101.5" stroke="#7a7a7a" stroke-width="1"/><path d="M388.5 74.5 V101.5" stroke="#f8f8f8" stroke-width="1"/>
<circle cx="408" cy="88.2" r="7.2" fill="#f4eef4" stroke="#2a90d0" stroke-width="2.2"/><path d="M408 76.5 V100 M395.8 88.2 H420.4" stroke="#2a90d0" stroke-width="2"/>
<path d="M430 78 H442 M430 78 V90 M430 90 H436" stroke="#5a5a5a" stroke-width="2" stroke-dasharray="2 1.4"/><circle cx="443.5" cy="87.5" r="5.6" fill="#a8d0f0" stroke="#3a3a3a" stroke-width="2.2"/><path d="M447.5 92 L453 99" stroke="#2a2a2a" stroke-width="3" stroke-linecap="round"/>
<path d="M462.5 74.5 V101.5" stroke="#7a7a7a" stroke-width="1"/><path d="M463.5 74.5 V101.5" stroke="#f8f8f8" stroke-width="1"/>
<path d="M670.5 86 L675.5 91 L680.5 86" stroke="#4a4a4a" stroke-width="1.3" fill="none"/>
<path d="M690.5 74.5 V101.5" stroke="#7a7a7a" stroke-width="1"/><path d="M691.5 74.5 V101.5" stroke="#f8f8f8" stroke-width="1"/>
<ellipse cx="710.5" cy="92" rx="6" ry="6.5" fill="#f4d8d4" stroke="#6a6a6a" stroke-width="1"/><path d="M703.5 86 Q703.5 77.5 710.5 77.5 Q717.5 77.5 717.5 86 Z" fill="#5a5a5a"/><ellipse cx="710.5" cy="86.3" rx="10.8" ry="2.3" fill="#3a3a3a"/><rect x="703.8" y="83.6" width="13.4" height="2" fill="#111"/><circle cx="708" cy="90.5" r="1" fill="#2a7ad0"/><circle cx="713" cy="90.5" r="1" fill="#2a7ad0"/>
<path d="M802 97 V88 L805 82 H809.5 L811 86 H813.5 L815 82 H819.5 L822.5 88 V97 H815 V90 H810 V97 Z" fill="#8a8a8a" stroke="#4a4a4a" stroke-width="1"/><rect x="805.3" y="77.5" width="3.6" height="4.5" fill="#e8c020"/><rect x="815.7" y="77.5" width="3.6" height="4.5" fill="#e8c020"/><rect x="801.5" y="95" width="9" height="2.8" fill="#e8c020"/><rect x="814.5" y="95" width="9" height="2.8" fill="#e8c020"/><rect x="808.5" y="85" width="7.5" height="3.2" fill="#3a3a3a"/>
<path d="M842 84.5 H849 V81.5 L858 88 L849 94.5 V91.5 H842 Z" fill="#3aa0e8"/><path d="M834 84.5 V91.5 M836.5 84.5 V91.5 M839 84.5 V91.5" stroke="#3aa0e8" stroke-width="1.4"/>
<path d="M876.5 77.5 H882.5 V82 H886 L879.5 89 L873 82 H876.5 Z" fill="#3a94e0"/><rect x="869" y="89" width="21.5" height="9.5" rx="1.5" fill="#fafafa" stroke="#8c8c8c" stroke-width="1.4"/><path d="M872 95 H887.5" stroke="#9a9a9a" stroke-width="1.6"/><rect x="885.5" y="91" width="2" height="2" fill="#6ac04a"/>
<rect x="908.5" y="77.5" width="5.5" height="11" rx="1.2" fill="#5a74a4"/><path d="M907 89.5 H916 Q922 91 921.5 96 L917 96 Q917 93.5 913 93.2 H907 Z" fill="#2a80d0"/><path d="M902.5 99.3 H921.5 M905 96 H913" stroke="#1a70c8" stroke-width="2.2"/>
<rect x="936.2" y="77" width="21.5" height="22" fill="#f6fafc" stroke="#5a86a6" stroke-width="1.5"/><rect x="939" y="80" width="3.4" height="3.4" fill="#9ab8d0"/><path d="M944.5 80.5 H955 M944.5 83.5 H955 M939 87.5 H947 M939 91 H946 M939 95.5 H950" stroke="#b4c8d8" stroke-width="1.3"/><circle cx="950.3" cy="89.5" r="4.6" fill="#a8d0f0" stroke="#3a3a3a" stroke-width="2"/><path d="M953.5 93.2 L958.3 98.8" stroke="#2a2a2a" stroke-width="2.8" stroke-linecap="round"/>
<path d="M971.5 81.5 V93 L974.5 90.5 L977 95.5 L979.3 94.3 L976.8 89.5 H980.5 Z" fill="#e4e4e4" stroke="#6a6a6a" stroke-width="1.2" stroke-linejoin="round"/>
<path d="M1006.5 68 V105" stroke="#b8b8b8"/><path d="M1007.5 68 V105" stroke="#fafafa"/>
<rect x="1028.5" y="76.5" width="15" height="12" rx="1" fill="#e8e8e8" stroke="#8c8c8c" stroke-width="1.2"/><path d="M1028.5 79.1 h15" stroke="#a8a8a8" stroke-width="1.4"/>
<rect x="1032.5" y="81.5" width="15" height="12" rx="1" fill="#e8e8e8" stroke="#8c8c8c" stroke-width="1.2"/><path d="M1032.5 84.1 h15" stroke="#a8a8a8" stroke-width="1.4"/>
<rect x="1036.5" y="87.5" width="15" height="12" rx="1" fill="#e8e8e8" stroke="#8c8c8c" stroke-width="1.2"/><path d="M1036.5 90.1 h15" stroke="#a8a8a8" stroke-width="1.4"/>
<path d="M1038.5 97 L1043 93.5 L1046 95.5 L1049.5 92" stroke="#8c8c8c" stroke-width="1.1" fill="none"/>
<rect x="1062.5" y="76.8" width="24" height="22.7" rx="1" fill="#e6e6e6" stroke="#8c8c8c" stroke-width="1.4"/><path d="M1074.5 77 V99.5" stroke="#8c8c8c" stroke-width="1.4"/><path d="M1064 92 L1068.5 87 L1071.5 90 L1074 87 M1076 92 L1080.5 87 L1083.5 90 L1086 86" stroke="#8c8c8c" stroke-width="1.1" fill="none"/>
<rect x="1096.2" y="76.8" width="24" height="22.7" rx="1" fill="#e6e6e6" stroke="#8c8c8c" stroke-width="1.4"/><path d="M1096.5 88 H1120" stroke="#8c8c8c" stroke-width="1.4"/><path d="M1098 85 L1103 84 L1107 80.5 L1111.5 85 L1116 80.5 L1119 84 M1098 97 L1103 96 L1107 92.5 L1111.5 97 L1116 92.5 L1119 96" stroke="#8c8c8c" stroke-width="1.1" fill="none"/>
<rect x="1130" y="78.5" width="11" height="9" fill="#ececec" stroke="#8c8c8c" stroke-width="1.3"/><path d="M1131.5 85.0 l3 -3 l2.5 2 l3 -3" stroke="#a0a0a0" stroke-width="1" fill="none"/>
<rect x="1143" y="78.5" width="11" height="9" fill="#ececec" stroke="#8c8c8c" stroke-width="1.3"/><path d="M1144.5 85.0 l3 -3 l2.5 2 l3 -3" stroke="#a0a0a0" stroke-width="1" fill="none"/>
<rect x="1130" y="89" width="11" height="9" fill="#ececec" stroke="#8c8c8c" stroke-width="1.3"/><path d="M1131.5 95.5 l3 -3 l2.5 2 l3 -3" stroke="#a0a0a0" stroke-width="1" fill="none"/>
<rect x="1143" y="89" width="11" height="9" fill="#ececec" stroke="#8c8c8c" stroke-width="1.3"/><path d="M1144.5 95.5 l3 -3 l2.5 2 l3 -3" stroke="#a0a0a0" stroke-width="1" fill="none"/>
<rect x="1163.5" y="78.5" width="24" height="19" fill="#ececec" stroke="#8c8c8c" stroke-width="1.3"/><circle cx="1175.5" cy="88" r="5.2" fill="none" stroke="#3a3a3a" stroke-width="3.4" stroke-dasharray="2.3 1.8"/><circle cx="1175.5" cy="88" r="3.6" fill="none" stroke="#3a3a3a" stroke-width="2.6"/>
<path d="M1201.5 68 V105" stroke="#b8b8b8"/><path d="M1202.5 68 V105" stroke="#fafafa"/>
<path d="M1665 948 V968" stroke="#8e8e8e" stroke-width="1.2"/>
<g fill="none" stroke="#4a4a4a" stroke-width="2.3"><path d="M1676 957 A6 6 0 0 1 1686.5 953.5"/><path d="M1687.5 959 A6 6 0 0 1 1677 962.5"/></g><path d="M1684 950.5 L1689.5 952 L1686 957 Z M1679.5 965.5 L1674 964 L1677.5 959 Z" fill="#4a4a4a"/>
<path d="M1707.8 952.5 V963.5" stroke="#4a4a4a" stroke-width="2.2"/>
<path d="M1725 948 V968" stroke="#8e8e8e" stroke-width="1.2"/>
<path d="M1741.8 953 V963" stroke="#4a4a4a" stroke-width="2"/><path d="M1741.8 949.5 L1745.5 954.5 H1738 Z M1741.8 966.5 L1745.5 961.5 H1738 Z" fill="#4a4a4a"/>
<path d="M1768 951.5 V964.5 M1761.5 958 H1774.5" stroke="#4a4a4a" stroke-width="2"/><path d="M1768 949 L1771 953 H1765 Z M1768 967 L1771 963 H1765 Z M1759 958 L1763 955 V961 Z M1777 958 L1773 955 V961 Z" fill="#4a4a4a"/>
<circle cx="1794.3" cy="958" r="6.6" fill="#f6f6f6" stroke="#7a7a7a" stroke-width="1.3"/><path d="M1790.6 958 H1798" stroke="#4a4a4a" stroke-width="2"/>
<circle cx="1820.4" cy="958" r="6.6" fill="#f6f6f6" stroke="#7a7a7a" stroke-width="1.3"/><path d="M1816.7 958 H1824.1 M1820.4 954.3 V961.7" stroke="#4a4a4a" stroke-width="2"/>
<path d="M1837.5 948 V968" stroke="#8e8e8e" stroke-width="1.2"/>
<path d="M1850.5 958 L1857 953 V963 Z M1884 958 L1877.5 953 V963 Z" fill="#c8c8c8"/>
<rect x="1898.5" y="951.3" width="13.5" height="13.5" fill="#f4f4f4" stroke="#5a5a5a" stroke-width="1.3"/><path d="M1898.5 954 H1912" stroke="#5a5a5a" stroke-width="1.6"/><path d="M1903 957 H1910.5 M1903 959.8 H1910.5 M1903 962.5 H1910.5" stroke="#7a7a7a" stroke-width="1.2"/><path d="M1900.3 957 H1901.6 M1900.3 959.8 H1901.6 M1900.3 962.5 H1901.6" stroke="#5a5a5a" stroke-width="1.2"/>
<path d="M27 996 H128" stroke="#3a3a3a" stroke-width="1.4"/><path d="M192 996 H266" stroke="#3a3a3a" stroke-width="1.4"/>
<path d="M153.5 994 L158 998.5 L162.5 994 M285.5 994 L290 998.5 L294.5 994" stroke="#4a4a4a" stroke-width="1.3" fill="none"/>
<path d="M172.5 981 V1008" stroke="#a0a0a0"/><path d="M173.5 981 V1008" stroke="#fafafa"/>
<path d="M310.5 976 V1013" stroke="#b8b8b8"/><path d="M311.5 976 V1013" stroke="#fafafa"/>
<path d="M451.5 994 H458.5 L455 998 Z" fill="#111"/>
<path d="M471.5 976 V1013" stroke="#b8b8b8"/><path d="M472.5 976 V1013" stroke="#fafafa"/>
<rect x="495.9" y="990" width="19.5" height="14.5" rx="1" fill="#fcfcfc" stroke="#8aa8c0" stroke-width="1.3"/><path d="M496.4 991.6 h7" stroke="#8ab0d8" stroke-width="1.6"/><path d="M498.4 1000.5 l3.5 -3.5 l3 2.5" stroke="#e02020" stroke-width="1.3" fill="none"/>
<rect x="529.8" y="990" width="19.5" height="14.5" rx="1" fill="#fcfcfc" stroke="#8aa8c0" stroke-width="1.3"/><path d="M530.3 991.6 h7" stroke="#8ab0d8" stroke-width="1.6"/><path d="M532.3 1000.5 l3.5 -3.5 l3 2.5" stroke="#e02020" stroke-width="1.3" fill="none"/>
<rect x="563.7" y="990" width="19.5" height="14.5" rx="1" fill="#fcfcfc" stroke="#8aa8c0" stroke-width="1.3"/><path d="M564.2 991.6 h7" stroke="#8ab0d8" stroke-width="1.6"/><path d="M566.2 1000.5 l3.5 -3.5 l3 2.5" stroke="#e02020" stroke-width="1.3" fill="none"/>
<rect x="597.6" y="990" width="19.5" height="14.5" rx="1" fill="#fcfcfc" stroke="#8aa8c0" stroke-width="1.3"/><path d="M598.1 991.6 h7" stroke="#8ab0d8" stroke-width="1.6"/><path d="M600.1 1000.5 l3.5 -3.5 l3 2.5" stroke="#e02020" stroke-width="1.3" fill="none"/>
<rect x="631.5" y="990" width="19.5" height="14.5" rx="1" fill="#fcfcfc" stroke="#8aa8c0" stroke-width="1.3"/><path d="M632.0 991.6 h7" stroke="#8ab0d8" stroke-width="1.6"/><path d="M634.0 1000.5 l3.5 -3.5 l3 2.5" stroke="#e02020" stroke-width="1.3" fill="none"/>
<rect x="665.4" y="990" width="19.5" height="14.5" rx="1" fill="#fcfcfc" stroke="#8aa8c0" stroke-width="1.3"/><path d="M665.9 991.6 h7" stroke="#8ab0d8" stroke-width="1.6"/><path d="M667.9 1000.5 l3.5 -3.5 l3 2.5" stroke="#e02020" stroke-width="1.3" fill="none"/>
<path d="M700 976 V1013" stroke="#b8b8b8"/><path d="M701 976 V1013" stroke="#fafafa"/>
<circle cx="575" cy="1049" r="10.2" fill="#3e3b42" stroke="#f0f0f0" stroke-width="3"/><path d="M567.5 1057 L561.5 1064" stroke="#f0f0f0" stroke-width="3.6" stroke-linecap="round"/>
<path d="M615 1066 Q612 1037 628 1037.5 Q642 1038 641.5 1051.5 Q641 1065 627 1065 Q622 1065 619 1063 Z" fill="#6a62c8"/><circle cx="627.5" cy="1051" r="14" fill="#7a6ad8"/><rect x="618.5" y="1045.5" width="12" height="11" rx="2" fill="#fff"/><path d="M631.5 1049.5 L636 1046.5 V1055.5 L631.5 1052.5 Z" fill="#fff"/>
<circle cx="683" cy="1052" r="14" fill="#db4437"/><path d="M683 1052 L670.9 1045.0 A14 14 0 0 0 683.0 1066 Z" fill="#0f9d58"/><path d="M683 1052 L683 1066 A14 14 0 0 0 695.1 1045.0 Z" fill="#ffcd40"/><circle cx="683" cy="1052" r="6.4" fill="#fff"/><circle cx="683" cy="1052" r="5.0" fill="#4285f4"/>
<circle cx="691" cy="1044" r="6.3" fill="#e8710a"/>
<path d="M730.5 1063 l1.3 -8 h3.4 l-1.3 8 Z M736.5 1063 l2.2 -16 h3.6 l-2.2 16 Z M743.0 1063 l3 -23 h3.8 l-3 23 Z" fill="#f58220"/>
<path d="M778 1042 Q778 1039.5 780.5 1039.5 H788 L791 1043 H806 Q808 1043 808 1045 V1064 Q808 1066 806 1066 H780 Q778 1066 778 1064 Z" fill="#e8a818"/><path d="M778 1046 H808 V1064 Q808 1066 806 1066 H780 Q778 1066 778 1064 Z" fill="#ffd04a"/><path d="M783 1066 V1061 Q783 1058.5 785.5 1058.5 H800.5 Q803 1058.5 803 1061 V1066 Z" fill="#2a8ae0"/><path d="M787 1062 H799" stroke="#1a60b0" stroke-width="1.6"/>
<rect x="846" y="1042" width="15" height="20.5" fill="#fff" stroke="#2b579a" stroke-width="1.2"/><path d="M850 1046 H859 M850 1049.5 H859 M850 1053 H859 M850 1056.5 H859 M850 1060 H859" stroke="#2b579a" stroke-width="1.3"/><path d="M834 1041.5 L850 1038.5 V1066 L834 1063 Z" fill="#2b579a"/>
<rect x="901" y="1042" width="15" height="20.5" fill="#fff" stroke="#d24726" stroke-width="1.2"/><circle cx="908" cy="1048" r="3" fill="none" stroke="#d24726" stroke-width="1.4"/><path d="M904 1055 H913 M904 1058.5 H913" stroke="#d24726" stroke-width="1.3"/><path d="M889 1041.5 L905 1038.5 V1066 L889 1063 Z" fill="#d24726"/>
<path d="M957.5 1038 L964.5 1058 H950.5 Z" fill="#f58a0a"/><path d="M954.6 1046.5 H960.4 L961.8 1050.5 H953.2 Z" fill="#f0f0f0"/><path d="M956 1042.5 H959 L959.7 1044.5 H955.3 Z" fill="#f0f0f0"/><path d="M948 1058 H967 L970 1066 H945 Z" fill="#f58a0a"/>
<circle cx="1013" cy="1052" r="14.5" fill="#1a78c8"/><path d="M998.5 1052 A14.5 14.5 0 0 1 1027.5 1050 Q1027 1058 1018 1057 Q1012 1056 1014 1051 Q1008 1046 1003 1053 Q1001 1060 1008 1065.7 A14.5 14.5 0 0 1 998.5 1052 Z" fill="#3ac0e0"/><path d="M1013 1037.5 A14.5 14.5 0 0 1 1027.5 1050 Q1027 1057 1019 1057 Q1022 1050 1016 1045 Q1008 1040 1000 1046 A14.5 14.5 0 0 1 1013 1037.5 Z" fill="#48d078"/><path d="M1004 1056 Q1006 1065 1016 1066 Q1024 1064 1026 1058 Q1016 1064 1008 1055 Z" fill="#0c4a90"/>
<rect x="1066" y="1042" width="15" height="20.5" fill="#fff" stroke="#3955a3" stroke-width="1.2"/><path d="M1074.5 1045 L1078 1048.5 L1074.5 1052 L1071 1048.5 Z M1071.5 1055 H1077.5 V1060 H1071.5 Z" fill="none" stroke="#3955a3" stroke-width="1.2"/><path d="M1054 1041.5 L1070 1038.5 V1066 L1054 1063 Z" fill="#3955a3"/>
<rect x="1121" y="1042" width="15" height="20.5" fill="#fff" stroke="#217346" stroke-width="1.2"/><path d="M1125 1046 H1134 M1125 1049.5 H1134 M1125 1053 H1134 M1125 1056.5 H1134 M1125 1060 H1134 M1129.5 1043 V1062" stroke="#217346" stroke-width="1.2"/><path d="M1109 1041.5 L1125 1038.5 V1066 L1109 1063 Z" fill="#217346"/>
<circle cx="1177.5" cy="1052" r="14" fill="#db4437"/><path d="M1177.5 1052 L1165.4 1045.0 A14 14 0 0 0 1177.5 1066 Z" fill="#0f9d58"/><path d="M1177.5 1052 L1177.5 1066 A14 14 0 0 0 1189.6 1045.0 Z" fill="#ffcd40"/><circle cx="1177.5" cy="1052" r="6.4" fill="#fff"/><circle cx="1177.5" cy="1052" r="5.0" fill="#4285f4"/>
<rect x="1221" y="1037.5" width="23" height="29" rx="2.5" fill="#7a8896"/><rect x="1224" y="1040.5" width="17" height="5.5" fill="#5ad0f8"/>
<rect x="1224.0" y="1048.5" width="4.8" height="4.6" fill="#e4e8ec"/>
<rect x="1230.1" y="1048.5" width="4.8" height="4.6" fill="#e4e8ec"/>
<rect x="1236.2" y="1048.5" width="4.8" height="4.6" fill="#e4e8ec"/>
<rect x="1224.0" y="1054.4" width="4.8" height="4.6" fill="#e4e8ec"/>
<rect x="1230.1" y="1054.4" width="4.8" height="4.6" fill="#e4e8ec"/>
<rect x="1236.2" y="1054.4" width="4.8" height="10.5" fill="#1a4a90"/>
<rect x="1224.0" y="1060.3" width="4.8" height="4.6" fill="#e4e8ec"/>
<rect x="1230.1" y="1060.3" width="4.8" height="4.6" fill="#e4e8ec"/>
<path d="M1288 1039 V1045 M1285.7 1041.3 H1290.3" stroke="#111" stroke-width="1.4"/><path d="M1288 1044.5 Q1291 1047 1289.5 1051 Q1293 1044.5 1298.5 1047.5 Q1303 1052 1296.5 1057.5 V1063.5 H1279.5 V1057.5 Q1273 1052 1277.5 1047.5 Q1283 1044.5 1286.5 1051 Q1285 1047 1288 1044.5 Z" fill="#fff" stroke="#111" stroke-width="1.3"/><path d="M1279.5 1057.5 Q1288 1054.5 1296.5 1057.5 M1279.5 1060.5 Q1288 1057.5 1296.5 1060.5" stroke="#111" stroke-width="1.1" fill="none"/>
<path d="M1335 1062.5 l1.3 -8 h3.4 l-1.3 8 Z M1341 1062.5 l2.2 -16 h3.6 l-2.2 16 Z M1347.5 1062.5 l3 -23 h3.8 l-3 23 Z" fill="#f58220"/>
<rect x="1383.5" y="1038" width="29" height="28.5" rx="4" fill="none" stroke="#a81e3a" stroke-width="1.6"/><path d="M1398.5 1043 h5 M1389.5 1046.5 h2.5" stroke="#c0203c" stroke-width="1.6"/>
<path d="M1619.5 1056 L1627 1048.5 L1634.5 1056" stroke="#f0f0f0" stroke-width="1.5" fill="none"/>
<path d="M1647 1056.5 Q1644.5 1050 1650.5 1048.5 Q1652 1044 1657 1045 Q1662 1045 1663 1050 Q1666 1052 1664 1056.5 Z" fill="#c8c8c8"/><path d="M1647 1056.5 Q1644.5 1050 1650.5 1048.5 L1658 1056.5 Z" fill="#f0f0f0"/><circle cx="1661.8" cy="1056.3" r="5.2" fill="#e81123"/><path d="M1659.6 1054.1 L1664 1058.5 M1664 1054.1 L1659.6 1058.5" stroke="#fff" stroke-width="1.4"/>
<g fill="none" stroke="#f4f4f4" stroke-width="1.6" stroke-linecap="round"><path d="M1682.5 1049.5 Q1692 1041 1701.5 1049.5"/><path d="M1685.5 1052.8 Q1692 1047 1698.5 1052.8"/><path d="M1688.5 1055.8 Q1692 1052.8 1695.5 1055.8"/></g><circle cx="1692" cy="1058.2" r="1.5" fill="#f4f4f4"/>
<path d="M1712.5 1048.5 H1716 L1720.5 1044.5 V1059.5 L1716 1055.5 H1712.5 Z" fill="none" stroke="#f4f4f4" stroke-width="1.4" stroke-linejoin="round"/><g fill="none" stroke="#f4f4f4" stroke-width="1.4" stroke-linecap="round"><path d="M1723.5 1049 Q1725.5 1052 1723.5 1055"/><path d="M1726 1046.5 Q1729.5 1052 1726 1057.5"/></g><path d="M1729 1044.5 Q1733 1052 1729 1059.5" stroke="#8a8a8a" stroke-width="1.2" fill="none"/>
<rect x="1748" y="1046.5" width="11.5" height="11" rx="1.5" fill="none" stroke="#f4f4f4" stroke-width="1.6"/><rect x="1759.5" y="1049.5" width="2" height="5" fill="#f4f4f4"/><rect x="1749.5" y="1052" width="3.5" height="4" fill="#f4f4f4"/><path d="M1744.5 1043.5 V1047 M1747 1043.5 V1047 M1743.3 1047 H1748.2 V1050.5 H1745.8 V1057.5" stroke="#f4f4f4" stroke-width="1.4" fill="none"/>
</svg>
<span class="t" style="left:10.30px;top:8.80px;font-size:20.2px;color:#f6f6f6;transform:scaleX(0.9389);">MetaStock</span>
<span class="t" style="left:722.30px;top:11.19px;font-size:16.2px;color:#f4f4f4;transform:scaleX(0.8855);">[S&amp;P 500 Nova Maquineta.mwc - [.SPX] S&amp;P 500 INDEX (Trade Price)]</span>
<span class="t" style="left:1189.30px;top:11.19px;font-size:16.2px;color:#f4f4f4;transform:scaleX(0.8451);">4,129.88 (+6.83008)</span>
<span class="t" style="left:1768.00px;top:10.79px;font-size:16.2px;color:#f4f4f4;transform:scaleX(0.9613);">Hourly</span>
<span class="t" style="left:6.30px;top:45.53px;font-size:14.5px;color:#161616;transform:scaleX(0.8431);text-underline-offset:2px;"><u>F</u>ile</span>
<span class="t" style="left:43.80px;top:45.53px;font-size:14.5px;color:#161616;transform:scaleX(0.9005);text-underline-offset:2px;"><u>E</u>dit</span>
<span class="t" style="left:83.00px;top:45.53px;font-size:14.5px;color:#161616;transform:scaleX(0.9465);text-underline-offset:2px;"><u>V</u>iew</span>
<span class="t" style="left:129.60px;top:45.53px;font-size:14.5px;color:#161616;transform:scaleX(0.8934);text-underline-offset:2px;"><u>I</u>nsert</span>
<span class="t" style="left:180.00px;top:45.53px;font-size:14.5px;color:#161616;transform:scaleX(0.8667);text-underline-offset:2px;">F<u>o</u>rmat</span>
<span class="t" style="left:237.50px;top:45.53px;font-size:14.5px;color:#161616;transform:scaleX(0.9542);text-underline-offset:2px;"><u>T</u>ools</span>
<span class="t" style="left:287.00px;top:45.53px;font-size:14.5px;color:#161616;transform:scaleX(0.9462);text-underline-offset:2px;"><u>W</u>indow</span>
<span class="t" style="left:353.80px;top:45.53px;font-size:14.5px;color:#161616;transform:scaleX(0.9221);text-underline-offset:2px;"><u>H</u>elp</span>
<span class="t" style="left:13.00px;top:301.38px;font-size:9px;color:#505050;font-weight:bold;">L</span>
<span class="t" style="left:2.00px;top:311.88px;font-size:9px;color:#505050;font-weight:bold;">S</span>
<span class="t" style="left:1.50px;top:401.77px;font-size:11.5px;color:#404040;transform:scaleX(0.9708);">abc</span>
<span class="t" style="left:64.80px;top:111.61px;font-size:15.7px;color:#54546c;transform:scaleX(0.9470);">Nova Maquineta Tendência (</span>
<span class="t" style="left:254.30px;top:111.61px;font-size:15.7px;color:#32cd32;transform:scaleX(0.8438);">0.0000,</span>
<span class="t" style="left:303.80px;top:111.61px;font-size:15.7px;color:#ff2020;transform:scaleX(0.8576);">-1.00000,</span>
<span class="t" style="left:365.70px;top:111.61px;font-size:15.7px;color:#ffff00;transform:scaleX(0.8496);">0.0000</span>
<span class="t" style="left:410.70px;top:111.61px;font-size:15.7px;color:#54546c;transform:scaleX(0.8225);">)</span>
<span class="t" style="left:64.70px;top:196.61px;font-size:15.7px;color:#54546c;transform:scaleX(0.9629);">Maquineta Tendência Alt (</span>
<span class="t" style="left:238.80px;top:196.61px;font-size:15.7px;color:#ffd21a;transform:scaleX(0.8516);">-96.6914,</span>
<span class="t" style="left:301.00px;top:196.61px;font-size:15.7px;color:#32cd32;transform:scaleX(0.8637);">-2.69609,</span>
<span class="t" style="left:364.00px;top:196.61px;font-size:15.7px;color:#ff1a1a;transform:scaleX(0.8745);">-113.012,</span>
<span class="t" style="left:425.80px;top:196.61px;font-size:15.7px;color:#ff6a20;transform:scaleX(0.8652);">-212.399,</span>
<span class="t" style="left:488.40px;top:196.61px;font-size:15.7px;color:#ffffe0;transform:scaleX(0.8345);">372.241,</span>
<span class="t" style="left:544.70px;top:196.61px;font-size:15.7px;color:#ffffe0;transform:scaleX(0.8637);">-372.241,</span>
<span class="t" style="left:607.70px;top:196.61px;font-size:15.7px;color:#ffffe0;transform:scaleX(0.8585);">-1,500.00,</span>
<span class="t" style="left:673.30px;top:196.61px;font-size:15.7px;color:#87ceeb;transform:scaleX(0.8172);">0.0,</span>
<span class="t" style="left:699.50px;top:196.61px;font-size:15.7px;color:#87ceeb;transform:scaleX(0.8614);">0.0</span>
<span class="t" style="left:722.00px;top:196.61px;font-size:15.7px;color:#54546c;transform:scaleX(0.8225);">)</span>
<span class="t" style="left:65.00px;top:308.91px;font-size:15.7px;color:#54546c;transform:scaleX(0.9385);">Maquineta Oscilação (</span>
<span class="t" style="left:212.00px;top:308.91px;font-size:15.7px;color:#ffff00;transform:scaleX(0.8792);">-0.00,</span>
<span class="t" style="left:252.80px;top:308.91px;font-size:15.7px;color:#ffffe0;transform:scaleX(0.8622);">-4.54828,</span>
<span class="t" style="left:315.00px;top:308.91px;font-size:15.7px;color:#000000;transform:scaleX(0.8427);">10.0000,</span>
<span class="t" style="left:372.00px;top:308.91px;font-size:15.7px;color:#990000;transform:scaleX(0.8281);">10.0000</span>
<span class="t" style="left:423.00px;top:308.91px;font-size:15.7px;color:#54546c;transform:scaleX(0.8225);">)</span>
<span class="t" style="left:64.70px;top:565.01px;font-size:15.7px;color:#3e3e50;transform:scaleX(0.8752);">S&amp;P 500 INDEX</span>
<span class="t" style="left:169.00px;top:565.01px;font-size:15.7px;color:#7d9dca;transform:scaleX(0.8373);">(4,123.06,</span>
<span class="t" style="left:233.50px;top:565.01px;font-size:15.7px;color:#7d9dca;transform:scaleX(0.8476);">4,132.01,</span>
<span class="t" style="left:293.50px;top:565.01px;font-size:15.7px;color:#7d9dca;transform:scaleX(0.8505);">4,113.82,</span>
<span class="t" style="left:353.50px;top:565.01px;font-size:15.7px;color:#7d9dca;transform:scaleX(0.8354);">4,129.88,</span>
<span class="t" style="left:413.50px;top:565.01px;font-size:15.7px;color:#7d9dca;transform:scaleX(0.8840);">+6.83008)</span>
<span class="t" style="left:476.60px;top:565.01px;font-size:15.7px;color:#3e3e50;transform:scaleX(0.8879);">, Forecast Prices (</span>
<span class="t" style="left:590.00px;top:565.01px;font-size:15.7px;color:#ff1a1a;transform:scaleX(0.8552);">4,137.01,</span>
<span class="t" style="left:650.80px;top:565.01px;font-size:15.7px;color:#32cd32;transform:scaleX(0.8590);">4,125.30</span>
<span class="t" style="left:707.00px;top:565.01px;font-size:15.7px;color:#3e3e50;transform:scaleX(0.8225);">)</span>
<span class="t" style="left:1752.00px;top:111.61px;font-size:15.7px;color:#5c5c72;transform:scaleX(0.8790);">DELAYED DATA</span>
<span class="t" style="left:1752.00px;top:196.61px;font-size:15.7px;color:#5c5c72;transform:scaleX(0.8790);">DELAYED DATA</span>
<span class="t" style="left:1752.00px;top:308.91px;font-size:15.7px;color:#5c5c72;transform:scaleX(0.8790);">DELAYED DATA</span>
<span class="t" style="left:1752.00px;top:565.01px;font-size:15.7px;color:#5c5c72;transform:scaleX(0.8790);">DELAYED DATA</span>
<span class="t" style="left:1902.96px;top:156.70px;font-size:15px;color:#f0f0f0;">0</span>
<span class="t" style="left:1877.93px;top:233.10px;font-size:15px;color:#f0f0f0;">1000</span>
<span class="t" style="left:1902.96px;top:255.50px;font-size:15px;color:#f0f0f0;">0</span>
<span class="t" style="left:1872.93px;top:278.00px;font-size:15px;color:#f0f0f0;">-1000</span>
<span class="t" style="left:1894.61px;top:347.15px;font-size:15px;color:#f0f0f0;">50</span>
<span class="t" style="left:1894.61px;top:363.42px;font-size:15px;color:#f0f0f0;">40</span>
<span class="t" style="left:1894.61px;top:379.69px;font-size:15px;color:#f0f0f0;">30</span>
<span class="t" style="left:1894.61px;top:395.96px;font-size:15px;color:#f0f0f0;">20</span>
<span class="t" style="left:1894.61px;top:412.23px;font-size:15px;color:#f0f0f0;">10</span>
<span class="t" style="left:1902.96px;top:428.50px;font-size:15px;color:#f0f0f0;">0</span>
<span class="t" style="left:1889.62px;top:444.77px;font-size:15px;color:#f0f0f0;">-10</span>
<span class="t" style="left:1889.62px;top:461.04px;font-size:15px;color:#f0f0f0;">-20</span>
<span class="t" style="left:1889.62px;top:477.31px;font-size:15px;color:#f0f0f0;">-30</span>
<span class="t" style="left:1889.62px;top:493.58px;font-size:15px;color:#f0f0f0;">-40</span>
<span class="t" style="left:1889.62px;top:509.85px;font-size:15px;color:#f0f0f0;">-50</span>
<span class="t" style="left:1889.62px;top:526.12px;font-size:15px;color:#f0f0f0;">-60</span>
<span class="t" style="left:1889.62px;top:542.39px;font-size:15px;color:#f0f0f0;">-70</span>
<span class="t" style="left:1877.93px;top:611.00px;font-size:15px;color:#f0f0f0;">4200</span>
<span class="t" style="left:1877.93px;top:636.30px;font-size:15px;color:#f0f0f0;">4150</span>
<span class="t" style="left:1877.93px;top:661.60px;font-size:15px;color:#f0f0f0;">4100</span>
<span class="t" style="left:1877.93px;top:686.90px;font-size:15px;color:#f0f0f0;">4050</span>
<span class="t" style="left:1877.93px;top:712.20px;font-size:15px;color:#f0f0f0;">4000</span>
<span class="t" style="left:1877.93px;top:737.50px;font-size:15px;color:#f0f0f0;">3950</span>
<span class="t" style="left:1877.93px;top:762.80px;font-size:15px;color:#f0f0f0;">3900</span>
<span class="t" style="left:1877.93px;top:788.10px;font-size:15px;color:#f0f0f0;">3850</span>
<span class="t" style="left:1877.93px;top:813.40px;font-size:15px;color:#f0f0f0;">3800</span>
<span class="t" style="left:1877.93px;top:838.70px;font-size:15px;color:#f0f0f0;">3750</span>
<span class="t" style="left:1877.93px;top:864.00px;font-size:15px;color:#f0f0f0;">3700</span>
<div style="position:absolute;left:1858px;top:640px;width:59px;height:22px;background:#000;border:1.5px solid #f0f0f0"></div>
<span class="t" style="left:1861.00px;top:643.90px;font-size:15px;color:#00e000;transform:scaleX(0.8631);">4129.880</span>
<span class="t" style="left:41.00px;top:906.30px;font-size:15px;color:#f4f4f4;">27</span>
<span class="t" style="left:96.34px;top:906.30px;font-size:15px;color:#f4f4f4;">28</span>
<span class="t" style="left:151.68px;top:906.30px;font-size:15px;color:#f4f4f4;">29</span>
<span class="t" style="left:207.03px;top:906.30px;font-size:15px;color:#f4f4f4;">30</span>
<span class="t" style="left:262.37px;top:906.30px;font-size:15px;color:#f4f4f4;">1</span>
<span class="t" style="left:317.71px;top:906.30px;font-size:15px;color:#f4f4f4;">5</span>
<span class="t" style="left:373.05px;top:906.30px;font-size:15px;color:#f4f4f4;">6</span>
<span class="t" style="left:428.39px;top:906.30px;font-size:15px;color:#f4f4f4;">7</span>
<span class="t" style="left:483.74px;top:906.30px;font-size:15px;color:#f4f4f4;">8</span>
<span class="t" style="left:539.08px;top:906.30px;font-size:15px;color:#f4f4f4;">11</span>
<span class="t" style="left:594.42px;top:906.30px;font-size:15px;color:#f4f4f4;">12</span>
<span class="t" style="left:649.76px;top:906.30px;font-size:15px;color:#f4f4f4;">13</span>
<span class="t" style="left:705.10px;top:906.30px;font-size:15px;color:#f4f4f4;">14</span>
<span class="t" style="left:760.45px;top:906.30px;font-size:15px;color:#f4f4f4;">15</span>
<span class="t" style="left:815.79px;top:906.30px;font-size:15px;color:#f4f4f4;">18</span>
<span class="t" style="left:871.13px;top:906.30px;font-size:15px;color:#f4f4f4;">19</span>
<span class="t" style="left:926.47px;top:906.30px;font-size:15px;color:#f4f4f4;">20</span>
<span class="t" style="left:981.81px;top:906.30px;font-size:15px;color:#f4f4f4;">21</span>
<span class="t" style="left:1037.16px;top:906.30px;font-size:15px;color:#f4f4f4;">22</span>
<span class="t" style="left:1092.50px;top:906.30px;font-size:15px;color:#f4f4f4;">25</span>
<span class="t" style="left:1147.84px;top:906.30px;font-size:15px;color:#f4f4f4;">26</span>
<span class="t" style="left:1203.18px;top:906.30px;font-size:15px;color:#f4f4f4;">27</span>
<span class="t" style="left:1258.52px;top:906.30px;font-size:15px;color:#f4f4f4;">28</span>
<span class="t" style="left:1313.87px;top:906.30px;font-size:15px;color:#f4f4f4;">29</span>
<span class="t" style="left:1369.21px;top:906.30px;font-size:15px;color:#f4f4f4;">1</span>
<span class="t" style="left:1424.55px;top:906.30px;font-size:15px;color:#f4f4f4;">2</span>
<span class="t" style="left:1479.89px;top:906.30px;font-size:15px;color:#f4f4f4;">3</span>
<span class="t" style="left:1535.23px;top:906.30px;font-size:15px;color:#f4f4f4;">4</span>
<span class="t" style="left:1590.58px;top:906.30px;font-size:15px;color:#f4f4f4;">5</span>
<span class="t" style="left:1645.92px;top:906.30px;font-size:15px;color:#f4f4f4;">8</span>
<span class="t" style="left:1701.26px;top:906.30px;font-size:15px;color:#f4f4f4;">9</span>
<span class="t" style="left:1812.80px;top:906.30px;font-size:15px;color:#f4f4f4;">10</span>
<span class="t" style="left:262.07px;top:926.10px;font-size:15px;color:#f4f4f4;">July</span>
<span class="t" style="left:1368.91px;top:926.10px;font-size:15px;color:#f4f4f4;">August</span>
<span class="t" style="left:9.50px;top:80.96px;font-size:16px;color:#ffffff;transform:scaleX(0.9370);font-weight:bold;">P</span>
<span class="t" style="left:477.50px;top:82.65px;font-size:14px;color:#fff;font-weight:bold;font-style:italic;">f</span>
<span class="t" style="left:494.00px;top:80.94px;font-size:14.6px;color:#101010;transform:scaleX(0.8968);">Missed In Action Pyramid</span>
<span class="t" style="left:735.00px;top:73.99px;font-size:26px;color:#d03c7c;font-style:italic;font-family:'Liberation Serif',serif;">f</span>
<span class="t" style="left:744.00px;top:89.11px;font-size:10.5px;color:#d03c7c;font-weight:bold;font-family:'Liberation Serif',serif;">(x)</span>
<span class="t" style="left:771.00px;top:75.49px;font-size:26px;color:#2a8a2a;transform:scaleX(0.9336);font-weight:bold;font-family:'Liberation Serif',serif;">$</span>
<span class="t" style="left:980.30px;top:76.73px;font-size:23px;color:#2e962e;transform:scaleX(0.9253);font-weight:bold;">?</span>
<span class="t" style="left:505.40px;top:992.60px;font-size:13px;color:#222;font-family:'Liberation Serif',serif;">1</span>
<span class="t" style="left:539.30px;top:992.60px;font-size:13px;color:#222;font-family:'Liberation Serif',serif;">2</span>
<span class="t" style="left:573.20px;top:992.60px;font-size:13px;color:#222;font-family:'Liberation Serif',serif;">3</span>
<span class="t" style="left:607.10px;top:992.60px;font-size:13px;color:#222;font-family:'Liberation Serif',serif;">4</span>
<span class="t" style="left:641.00px;top:992.60px;font-size:13px;color:#222;font-family:'Liberation Serif',serif;">5</span>
<span class="t" style="left:674.90px;top:992.60px;font-size:13px;color:#222;font-family:'Liberation Serif',serif;">6</span>
<span class="t" style="left:63.00px;top:1034.58px;font-size:15.5px;color:#ffffff;transform:scaleX(0.9095);">29°C</span>
<span class="t" style="left:63.00px;top:1054.38px;font-size:15.5px;color:#e8e8e8;transform:scaleX(0.9151);">Sol</span>
<span class="t" style="left:688.10px;top:1040.13px;font-size:8px;color:#fff;font-weight:bold;">N</span>
<span class="t" style="left:836.50px;top:1046.50px;font-size:13px;color:#fff;transform:scaleX(0.8965);font-weight:bold;">W</span>
<span class="t" style="left:893.00px;top:1046.07px;font-size:13.5px;color:#fff;font-weight:bold;">P</span>
<span class="t" style="left:1057.30px;top:1046.07px;font-size:13.5px;color:#fff;font-weight:bold;">V</span>
<span class="t" style="left:1112.30px;top:1046.07px;font-size:13.5px;color:#fff;font-weight:bold;">X</span>
<span class="t" style="left:1387.00px;top:1048.80px;font-size:15px;color:#b41e3c;transform:scaleX(0.9425);">Pro</span>
<span class="t" style="left:1823.3px;top:1034.33px;font-size:14.5px;color:#ffffff;transform:scaleX(0.9645);">16:34</span>
<span class="t" style="left:1781.80px;top:1054.33px;font-size:14.5px;color:#ffffff;transform:scaleX(1.0541);">09/08/2022</span>
<span class="t" style="left:1879.60px;top:1045.57px;font-size:13.5px;color:#0a1a2a;">1</span>
</body></html>
